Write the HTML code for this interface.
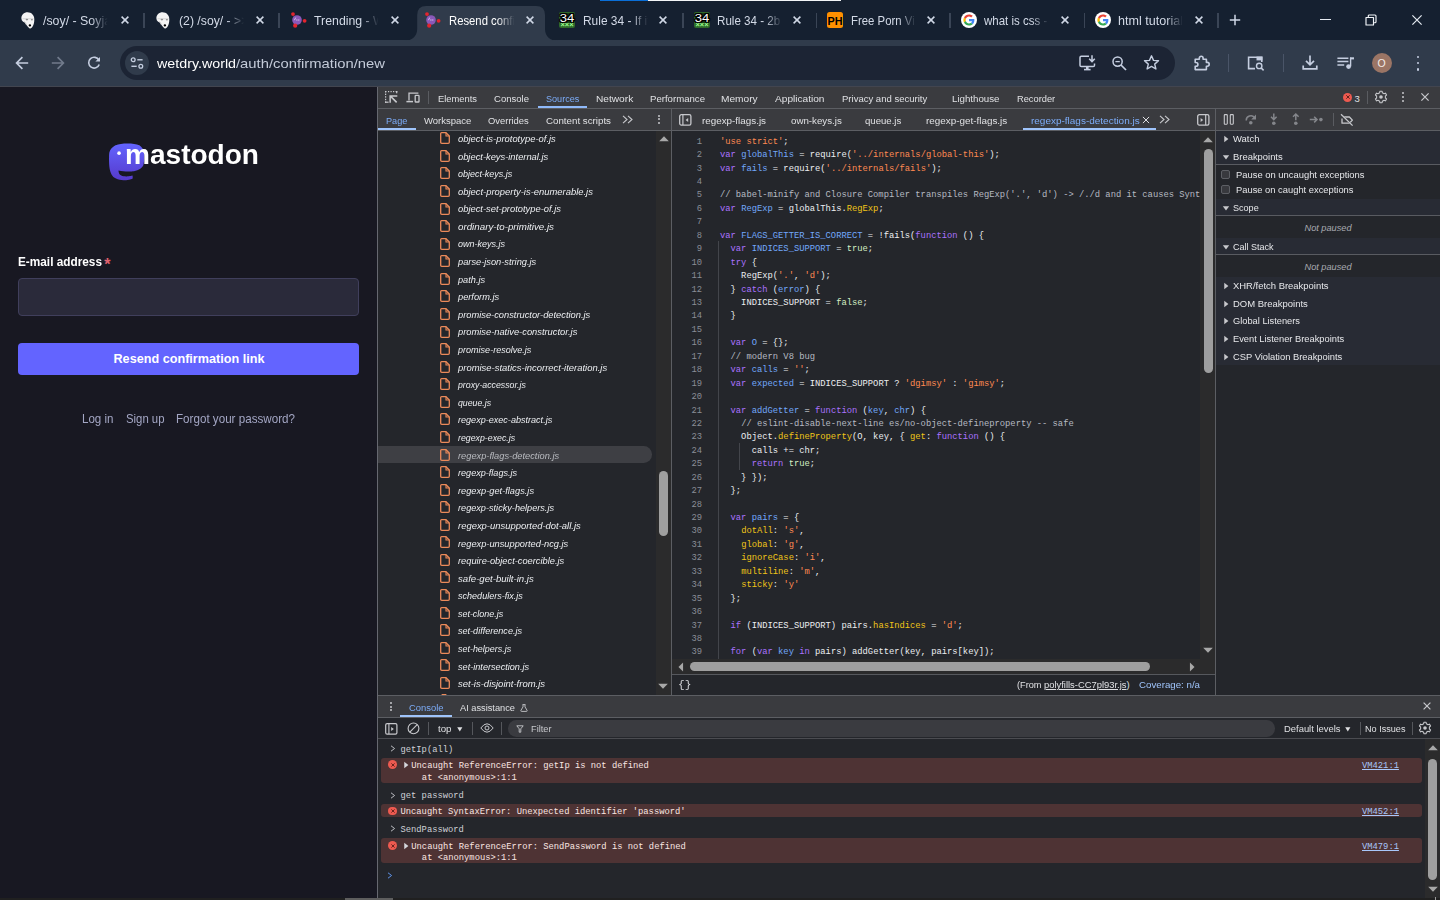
<!DOCTYPE html>
<html lang="en"><head><meta charset="utf-8"><title>Resend confirmation link - wetdry.world</title>
<style>
*{margin:0;padding:0;box-sizing:border-box}
html,body{width:1440px;height:900px;overflow:hidden;background:#24262b}
body{position:relative;font-family:"Liberation Sans", "DejaVu Sans", sans-serif;}
section{position:absolute;left:0;top:0;width:0;height:0}
section>div,section>svg,section>span{position:absolute}
.t{white-space:pre;display:block}
.m{font-family:"Liberation Mono", "DejaVu Sans Mono", monospace}
.b{display:inline-block;width:0;height:0}
svg{overflow:visible}
</style></head>
<body>
<section aria-label="Browser tab strip and toolbar">
<div style="left:0px;top:0px;width:1440px;height:40px;background:#152030;"></div>
<div style="left:600px;top:0px;width:48px;height:1px;background:#0a6fd8;"></div>
<div style="left:648px;top:0px;width:193px;height:1px;background:#f4f6f8;"></div>
<div style="left:0px;top:40px;width:1440px;height:46px;background:#303b4b;"></div>
<svg style="left:404px;top:6px;" width="156" height="35" viewBox="0 0 156 35"><path d="M0 35 C7 35 13.2 31 13.2 23 L13.2 9 Q13.2 0 22.2 0 L132 0 Q141 0 141 9 L141 23 C141 31 147 35 154 35 Z" fill="#303b4b"/></svg>
<div style="left:143.0px;top:13px;width:1.5px;height:15px;background:#3a4556;"></div>
<div style="left:278.0px;top:13px;width:1.5px;height:15px;background:#3a4556;"></div>
<div style="left:682.0px;top:13px;width:1.5px;height:15px;background:#3a4556;"></div>
<div style="left:815.5px;top:13px;width:1.5px;height:15px;background:#3a4556;"></div>
<div style="left:949.0px;top:13px;width:1.5px;height:15px;background:#3a4556;"></div>
<div style="left:1083.5px;top:13px;width:1.5px;height:15px;background:#3a4556;"></div>
<div style="left:1217.3px;top:13px;width:1.5px;height:15px;background:#3a4556;"></div>
<svg style="left:21.2px;top:11.7px;" width="14" height="17" viewBox="0 0 14 17"><path d="M0.4 6.5C0.2 2.8 3 0.2 6.6 0.2C10.4 0.2 13.2 3 13.3 7C13.4 10 12.8 12.6 11.6 14.6C10.9 16 9.6 16.9 8.4 16.2C6.6 15 5 12.6 3.6 10.6C2.4 9.9 0.6 9.2 0.4 6.5Z" fill="#f4f4f4"/><path d="M1.6 6.7H12.6" stroke="#cfcfcf" stroke-width="0.8"/><ellipse cx="5.9" cy="7.6" rx="1.3" ry="0.8" fill="#909090"/><ellipse cx="10.9" cy="7.8" rx="1.1" ry="0.8" fill="#909090"/><path d="M3.4 9.4q1.4 1.2 2 3.4" stroke="#c4c4c4" stroke-width="0.8" fill="none"/><ellipse cx="8.9" cy="13.4" rx="1.25" ry="1.05" fill="#000"/></svg>
<svg style="left:156.2px;top:11.7px;" width="14" height="17" viewBox="0 0 14 17"><path d="M0.4 6.5C0.2 2.8 3 0.2 6.6 0.2C10.4 0.2 13.2 3 13.3 7C13.4 10 12.8 12.6 11.6 14.6C10.9 16 9.6 16.9 8.4 16.2C6.6 15 5 12.6 3.6 10.6C2.4 9.9 0.6 9.2 0.4 6.5Z" fill="#f4f4f4"/><path d="M1.6 6.7H12.6" stroke="#cfcfcf" stroke-width="0.8"/><ellipse cx="5.9" cy="7.6" rx="1.3" ry="0.8" fill="#909090"/><ellipse cx="10.9" cy="7.8" rx="1.1" ry="0.8" fill="#909090"/><path d="M3.4 9.4q1.4 1.2 2 3.4" stroke="#c4c4c4" stroke-width="0.8" fill="none"/><ellipse cx="8.9" cy="13.4" rx="1.25" ry="1.05" fill="#000"/></svg>
<svg style="left:288px;top:11px;" width="18" height="18" viewBox="0 0 18 18"><circle cx="9" cy="9" r="4.8" fill="#8a58b8"/><path d="M6.4 9.2l1.3-2.6M8.9 8.3v1.4M10.8 8.3v1.4" stroke="#d9c9ee" stroke-width="0.9" fill="none"/><circle cx="5" cy="3.1" r="1.9" fill="#e3242e"/><circle cx="16.6" cy="9.8" r="1.9" fill="#e3242e"/><circle cx="7.2" cy="14.7" r="2.1" fill="#e3242e"/></svg>
<svg style="left:422.3px;top:11px;" width="18" height="18" viewBox="0 0 18 18"><circle cx="9" cy="9" r="4.8" fill="#8a58b8"/><path d="M6.4 9.2l1.3-2.6M8.9 8.3v1.4M10.8 8.3v1.4" stroke="#d9c9ee" stroke-width="0.9" fill="none"/><circle cx="5" cy="3.1" r="1.9" fill="#e3242e"/><circle cx="16.6" cy="9.8" r="1.9" fill="#e3242e"/><circle cx="7.2" cy="14.7" r="2.1" fill="#e3242e"/></svg>
<div style="left:559px;top:12px;width:16px;height:15.5px;background:#2f6a2b;border-radius:2px"></div>
<div style="left:559.5px;top:12.5px;width:15px;height:10.5px;background:rgba(0,0,0,0.45);border-radius:2px"></div>
<span id="t0" class="t " style="top:13.41px;font-size:11.5px;line-height:11.5px;color:#ffffff;left:567px;transform:translateX(-50%) scaleX(1.1331);text-shadow:1px 0 0 #000,-1px 0 0 #000,0 1px 0 #000,0 -1px 0 #000,1px 1px 0 #000,-1px -1px 0 #000,1px -1px 0 #000,-1px 1px 0 #000,0 0 2px #000;">34</span>
<span id="t1" class="t " style="top:21.71px;font-size:6.5px;line-height:6.5px;color:#9dff8f;font-weight:bold;left:567px;transform:translateX(-50%) scaleX(1.1413);">×××</span>
<div style="left:694px;top:12px;width:16px;height:15.5px;background:#2f6a2b;border-radius:2px"></div>
<div style="left:694.5px;top:12.5px;width:15px;height:10.5px;background:rgba(0,0,0,0.45);border-radius:2px"></div>
<span id="t2" class="t " style="top:13.41px;font-size:11.5px;line-height:11.5px;color:#ffffff;left:702px;transform:translateX(-50%) scaleX(1.1331);text-shadow:1px 0 0 #000,-1px 0 0 #000,0 1px 0 #000,0 -1px 0 #000,1px 1px 0 #000,-1px -1px 0 #000,1px -1px 0 #000,-1px 1px 0 #000,0 0 2px #000;">34</span>
<span id="t3" class="t " style="top:21.71px;font-size:6.5px;line-height:6.5px;color:#9dff8f;font-weight:bold;left:702px;transform:translateX(-50%) scaleX(1.1413);">×××</span>
<div style="left:827px;top:12px;width:16px;height:16px;background:#ff9000;border-radius:2.5px"></div>
<span id="t4" class="t " style="top:15.60px;font-size:11.5px;line-height:11.5px;color:#000;font-weight:bold;left:835.2px;transform:translateX(-50%) scaleX(0.9384);">PH</span>
<svg style="left:961px;top:12px;" width="16" height="16" viewBox="0 0 16 16"><circle cx="8" cy="8" r="8" fill="#fff"/><g transform="translate(2.4,2.4) scale(0.2333)"><path fill="#EA4335" d="M24 9.5c3.54 0 6.71 1.22 9.21 3.6l6.85-6.85C35.9 2.38 30.47 0 24 0 14.62 0 6.51 5.38 2.56 13.22l7.98 6.19C12.43 13.72 17.74 9.5 24 9.5z"/><path fill="#4285F4" d="M46.98 24.55c0-1.57-.15-3.09-.38-4.55H24v9.02h12.94c-.58 2.96-2.26 5.48-4.78 7.18l7.73 6c4.51-4.18 7.09-10.36 7.09-17.65z"/><path fill="#FBBC05" d="M10.53 28.59c-.48-1.45-.76-2.99-.76-4.59s.27-3.14.76-4.59l-7.98-6.19C.92 16.46 0 20.12 0 24c0 3.88.92 7.54 2.56 10.78l7.97-6.19z"/><path fill="#34A853" d="M24 48c6.48 0 11.93-2.13 15.89-5.81l-7.73-6c-2.15 1.45-4.92 2.3-8.16 2.3-6.26 0-11.57-4.22-13.47-9.91l-7.98 6.19C6.51 42.62 14.62 48 24 48z"/></g></svg>
<svg style="left:1094.5px;top:12px;" width="16" height="16" viewBox="0 0 16 16"><circle cx="8" cy="8" r="8" fill="#fff"/><g transform="translate(2.4,2.4) scale(0.2333)"><path fill="#EA4335" d="M24 9.5c3.54 0 6.71 1.22 9.21 3.6l6.85-6.85C35.9 2.38 30.47 0 24 0 14.62 0 6.51 5.38 2.56 13.22l7.98 6.19C12.43 13.72 17.74 9.5 24 9.5z"/><path fill="#4285F4" d="M46.98 24.55c0-1.57-.15-3.09-.38-4.55H24v9.02h12.94c-.58 2.96-2.26 5.48-4.78 7.18l7.73 6c4.51-4.18 7.09-10.36 7.09-17.65z"/><path fill="#FBBC05" d="M10.53 28.59c-.48-1.45-.76-2.99-.76-4.59s.27-3.14.76-4.59l-7.98-6.19C.92 16.46 0 20.12 0 24c0 3.88.92 7.54 2.56 10.78l7.97-6.19z"/><path fill="#34A853" d="M24 48c6.48 0 11.93-2.13 15.89-5.81l-7.73-6c-2.15 1.45-4.92 2.3-8.16 2.3-6.26 0-11.57-4.22-13.47-9.91l-7.98 6.19C6.51 42.62 14.62 48 24 48z"/></g></svg>
<span id="t5" class="t " style="top:15.00px;font-size:12.6px;line-height:12.6px;color:#d3dae7;left:43.3px;width:66.2px;overflow:hidden;padding:3px 0;margin-top:-3px;transform:scaleX(0.9824);transform-origin:0 0;-webkit-mask-image:linear-gradient(90deg,#000 74%,transparent 100%);mask-image:linear-gradient(90deg,#000 74%,transparent 100%);">/soy/ - Soyjak</span>
<span id="t6" class="t " style="top:15.00px;font-size:12.6px;line-height:12.6px;color:#d3dae7;left:178.9px;width:66.9px;overflow:hidden;padding:3px 0;margin-top:-3px;transform:scaleX(0.972);transform-origin:0 0;-webkit-mask-image:linear-gradient(90deg,#000 74%,transparent 100%);mask-image:linear-gradient(90deg,#000 74%,transparent 100%);">(2) /soy/ - &gt;&gt;</span>
<span id="t7" class="t " style="top:15.00px;font-size:12.6px;line-height:12.6px;color:#d3dae7;left:313.7px;width:66.4px;overflow:hidden;padding:3px 0;margin-top:-3px;transform:scaleX(0.9783);transform-origin:0 0;-webkit-mask-image:linear-gradient(90deg,#000 74%,transparent 100%);mask-image:linear-gradient(90deg,#000 74%,transparent 100%);">Trending - W</span>
<span id="t8" class="t " style="top:15.00px;font-size:12.6px;line-height:12.6px;color:#ffffff;left:448.79999999999995px;width:72.5px;overflow:hidden;padding:3px 0;margin-top:-3px;transform:scaleX(0.8965);transform-origin:0 0;-webkit-mask-image:linear-gradient(90deg,#000 74%,transparent 100%);mask-image:linear-gradient(90deg,#000 74%,transparent 100%);">Resend confi</span>
<span id="t9" class="t " style="top:15.00px;font-size:12.6px;line-height:12.6px;color:#d3dae7;left:582.6999999999999px;width:68.7px;overflow:hidden;padding:3px 0;margin-top:-3px;transform:scaleX(0.9463);transform-origin:0 0;-webkit-mask-image:linear-gradient(90deg,#000 74%,transparent 100%);mask-image:linear-gradient(90deg,#000 74%,transparent 100%);">Rule 34 - If it</span>
<span id="t10" class="t " style="top:15.00px;font-size:12.6px;line-height:12.6px;color:#d3dae7;left:716.9px;width:70.6px;overflow:hidden;padding:3px 0;margin-top:-3px;transform:scaleX(0.9212);transform-origin:0 0;-webkit-mask-image:linear-gradient(90deg,#000 74%,transparent 100%);mask-image:linear-gradient(90deg,#000 74%,transparent 100%);">Rule 34 - 2b</span>
<span id="t11" class="t " style="top:15.00px;font-size:12.6px;line-height:12.6px;color:#d3dae7;left:850.6px;width:71.9px;overflow:hidden;padding:3px 0;margin-top:-3px;transform:scaleX(0.9036);transform-origin:0 0;-webkit-mask-image:linear-gradient(90deg,#000 74%,transparent 100%);mask-image:linear-gradient(90deg,#000 74%,transparent 100%);">Free Porn Vi</span>
<span id="t12" class="t " style="top:15.00px;font-size:12.6px;line-height:12.6px;color:#d3dae7;left:984.4px;width:71.2px;overflow:hidden;padding:3px 0;margin-top:-3px;transform:scaleX(0.9124);transform-origin:0 0;-webkit-mask-image:linear-gradient(90deg,#000 74%,transparent 100%);mask-image:linear-gradient(90deg,#000 74%,transparent 100%);">what is css - </span>
<span id="t13" class="t " style="top:15.00px;font-size:12.6px;line-height:12.6px;color:#d3dae7;left:1118.4px;width:65.1px;overflow:hidden;padding:3px 0;margin-top:-3px;transform:scaleX(0.9984);transform-origin:0 0;-webkit-mask-image:linear-gradient(90deg,#000 74%,transparent 100%);mask-image:linear-gradient(90deg,#000 74%,transparent 100%);">html tutorial</span>
<svg style="left:118.8px;top:14.3px;" width="12" height="12" viewBox="0 0 12 12"><path d="M2.6 2.6L9.4 9.4M9.4 2.6L2.6 9.4" stroke="#d0d8e6" stroke-width="1.5" fill="none"/></svg>
<svg style="left:254px;top:14.3px;" width="12" height="12" viewBox="0 0 12 12"><path d="M2.6 2.6L9.4 9.4M9.4 2.6L2.6 9.4" stroke="#d0d8e6" stroke-width="1.5" fill="none"/></svg>
<svg style="left:388.7px;top:14.3px;" width="12" height="12" viewBox="0 0 12 12"><path d="M2.6 2.6L9.4 9.4M9.4 2.6L2.6 9.4" stroke="#d0d8e6" stroke-width="1.5" fill="none"/></svg>
<svg style="left:523.5px;top:14.3px;" width="12" height="12" viewBox="0 0 12 12"><path d="M2.6 2.6L9.4 9.4M9.4 2.6L2.6 9.4" stroke="#d0d8e6" stroke-width="1.5" fill="none"/></svg>
<svg style="left:657px;top:14.3px;" width="12" height="12" viewBox="0 0 12 12"><path d="M2.6 2.6L9.4 9.4M9.4 2.6L2.6 9.4" stroke="#d0d8e6" stroke-width="1.5" fill="none"/></svg>
<svg style="left:791px;top:14.3px;" width="12" height="12" viewBox="0 0 12 12"><path d="M2.6 2.6L9.4 9.4M9.4 2.6L2.6 9.4" stroke="#d0d8e6" stroke-width="1.5" fill="none"/></svg>
<svg style="left:925px;top:14.3px;" width="12" height="12" viewBox="0 0 12 12"><path d="M2.6 2.6L9.4 9.4M9.4 2.6L2.6 9.4" stroke="#d0d8e6" stroke-width="1.5" fill="none"/></svg>
<svg style="left:1059px;top:14.3px;" width="12" height="12" viewBox="0 0 12 12"><path d="M2.6 2.6L9.4 9.4M9.4 2.6L2.6 9.4" stroke="#d0d8e6" stroke-width="1.5" fill="none"/></svg>
<svg style="left:1192.7px;top:14.3px;" width="12" height="12" viewBox="0 0 12 12"><path d="M2.6 2.6L9.4 9.4M9.4 2.6L2.6 9.4" stroke="#d0d8e6" stroke-width="1.5" fill="none"/></svg>
<svg style="left:1228.5px;top:14px;" width="12" height="12" viewBox="0 0 12 12"><path d="M6 0.8V11.2M0.8 6H11.2" stroke="#d0d8e6" stroke-width="1.5"/></svg>
<div style="left:1320px;top:18.8px;width:10.5px;height:1.2px;background:#e6ebf2;"></div>
<svg style="left:1365px;top:14px;" width="12" height="12" viewBox="0 0 12 12"><path d="M1 3.5h7.5v7.5h-7.5zM3.3 3.3V2Q3.3 1 4.3 1H10Q11 1 11 2V7.7Q11 8.7 10 8.7H8.7" stroke="#f2f5f9" stroke-width="1.15" fill="none" stroke-linejoin="round"/></svg>
<svg style="left:1410.5px;top:14px;" width="12" height="12" viewBox="0 0 12 12"><path d="M1.4000000000000004 1.4000000000000004L10.6 10.6M10.6 1.4000000000000004L1.4000000000000004 10.6" stroke="#e6ebf2" stroke-width="1.2" fill="none"/></svg>
<svg style="left:14px;top:55px;" width="16" height="16" viewBox="0 0 16 16"><path d="M14.2 8H2.6M8.4 2.2L2.6 8L8.4 13.8" stroke="#c5cee0" stroke-width="1.7" fill="none"/></svg>
<svg style="left:50px;top:55px;" width="16" height="16" viewBox="0 0 16 16"><path d="M1.8 8H13.4M7.6 2.2L13.4 8L7.6 13.8" stroke="#717b8c" stroke-width="1.7" fill="none"/></svg>
<svg style="left:86px;top:55px;" width="16" height="16" viewBox="0 0 16 16"><path d="M12.9 5.2A5.4 5.4 0 1 0 13.2 9.4" stroke="#c5cee0" stroke-width="1.6" fill="none"/><path d="M14 2v4.6H9.4z" fill="#c5cee0"/></svg>
<div style="left:120px;top:46px;width:1055px;height:34px;background:#1c2434;border-radius:17px"></div>
<div style="left:125px;top:51px;width:24px;height:24px;background:#303b4b;border-radius:12px"></div>
<svg style="left:130px;top:56px;" width="14" height="14" viewBox="0 0 14 14"><circle cx="3.2" cy="3.8" r="1.9" stroke="#c5cee0" stroke-width="1.3" fill="none"/><path d="M7.3 3.8H12.6" stroke="#c5cee0" stroke-width="1.4"/><circle cx="10.8" cy="10.3" r="1.9" stroke="#c5cee0" stroke-width="1.3" fill="none"/><path d="M1.4 10.3H6.7" stroke="#c5cee0" stroke-width="1.4"/></svg>
<span id="t14" class="t " style="top:56.91px;font-size:13.6px;line-height:13.6px;color:#ffffff;left:157px;transform-origin:0 50%;transform:scaleX(1.0492);">wetdry.world</span>
<span id="t15" class="t " style="top:56.91px;font-size:13.6px;line-height:13.6px;color:#c3cad8;left:236.3px;transform-origin:0 50%;transform:scaleX(1.0893);">/auth/confirmation/new</span>
<svg style="left:1078px;top:54px;" width="19" height="18" viewBox="0 0 19 18"><path d="M11 2.2H3.3Q2 2.2 2 3.5V11.3Q2 12.6 3.3 12.6H15.2Q16.5 12.6 16.5 11.3V9.5" stroke="#c5cee0" stroke-width="1.5" fill="none"/><path d="M6 15.6H12.6" stroke="#c5cee0" stroke-width="1.6"/><path d="M9.3 12.6V15" stroke="#c5cee0" stroke-width="2.6"/><path d="M14 1.2V7.2M11.2 4.8L14 7.6L16.8 4.8" stroke="#c5cee0" stroke-width="1.5" fill="none"/></svg>
<svg style="left:1111px;top:55px;" width="17" height="17" viewBox="0 0 17 17"><circle cx="6.6" cy="6.6" r="4.6" stroke="#c5cee0" stroke-width="1.5" fill="none"/><path d="M10 10L15 15" stroke="#c5cee0" stroke-width="1.7"/><path d="M4.4 6.6H8.8" stroke="#c5cee0" stroke-width="1.3"/></svg>
<svg style="left:1143px;top:54px;" width="17" height="17" viewBox="0 0 17 17"><path d="M8.5 1.8L10.5 6.4L15.5 6.8L11.7 10.1L12.9 15L8.5 12.4L4.1 15L5.3 10.1L1.5 6.8L6.5 6.4Z" stroke="#c5cee0" stroke-width="1.4" fill="none" stroke-linejoin="round"/></svg>
<svg style="left:1193px;top:54px;" width="18" height="18" viewBox="0 0 18 18"><path d="M2.2 5.2H6.3V4.2A1.9 1.9 0 0 1 10.1 4.2V5.2H13.4V8.4H14.3A1.9 1.9 0 0 1 14.3 12.2H13.4V15.6H2.2V12.3H3A1.9 1.9 0 0 0 3 8.5H2.2Z" stroke="#c5cee0" stroke-width="1.6" fill="none" stroke-linejoin="round"/></svg>
<div style="left:1228px;top:54px;width:1.3px;height:18px;background:#4a5568;"></div>
<svg style="left:1246px;top:54px;" width="20" height="18" viewBox="0 0 20 18"><path d="M9 14.6H2.6V3.2H15.8V8" stroke="#c5cee0" stroke-width="1.6" fill="none"/><path d="M10.5 2.6H16.4V6.4H10.5Z" fill="#c5cee0"/><circle cx="13.2" cy="11.9" r="2.7" stroke="#c5cee0" stroke-width="1.4" fill="none"/><path d="M15.1 13.9L17.6 16.4" stroke="#c5cee0" stroke-width="1.5"/></svg>
<div style="left:1283px;top:54px;width:1.3px;height:18px;background:#4a5568;"></div>
<svg style="left:1301px;top:54px;" width="18" height="18" viewBox="0 0 18 18"><path d="M9 1.5V10.4M5 6.8L9 10.8L13 6.8" stroke="#c5cee0" stroke-width="1.7" fill="none"/><path d="M2.2 11.4V14.8H15.8V11.4" stroke="#c5cee0" stroke-width="1.7" fill="none"/></svg>
<svg style="left:1336px;top:54px;" width="20" height="18" viewBox="0 0 20 18"><path d="M1.4 4.2H12.4M1.4 7.6H12.4M1.4 11H8.2" stroke="#c5cee0" stroke-width="1.5"/><path d="M14.6 3.6V12.4" stroke="#c5cee0" stroke-width="1.4"/><path d="M14 3.3H18V5.4H14Z" fill="#c5cee0"/><circle cx="12.6" cy="12.6" r="2.4" fill="#c5cee0"/></svg>
<div style="left:1371.5px;top:53px;width:20px;height:20px;background:#9b7565;border-radius:10px"></div>
<span id="t16" class="t " style="top:57.71px;font-size:10.5px;line-height:10.5px;color:#f4ece8;left:1381.5px;transform:translateX(-50%);">O</span>
<div style="left:1416.6px;top:55.6px;width:2.4px;height:2.4px;background:#c5cee0;border-radius:2px"></div>
<div style="left:1416.6px;top:61.9px;width:2.4px;height:2.4px;background:#c5cee0;border-radius:2px"></div>
<div style="left:1416.6px;top:68.2px;width:2.4px;height:2.4px;background:#c5cee0;border-radius:2px"></div>
<div style="left:0px;top:86px;width:1440px;height:1px;background:#42454f;"></div>
</section>
<section aria-label="Mastodon resend confirmation page">
<div style="left:0px;top:87px;width:377px;height:811px;background:#181822;"></div>
<svg style="left:108px;top:141.8px;" width="40" height="42.1" viewBox="0 0 38 40"><defs><linearGradient id="mg" x1="0" y1="0" x2="0" y2="1"><stop offset="0" stop-color="#6364ff"/><stop offset="1" stop-color="#563acc"/></linearGradient></defs><path d="M34.6 12.9C34.6 5.3 29.6 3.1 29.6 3.1C24.7 0.8 12.3 0.8 7.4 3.1C7.4 3.1 1 5.3 1 12.9C1 21.9 0.5 33.1 9.2 35.4C12.3 36.2 15 36.4 17.2 36.3C21.2 36 23.5 34.8 23.5 34.8L23.4 31.9C23.4 31.9 20.5 32.8 17.2 32.7C14 32.6 10.6 32.3 10.1 28.3C10 27.9 10 27.5 10 27.1C17 28.8 23 27.9 24.6 27.7C29.2 27.1 33.2 24.3 33.7 21.7C34.6 17.6 34.6 12.9 34.6 12.9Z" fill="url(#mg)"/><circle cx="10.5" cy="10.6" r="1.7" fill="#fff"/></svg>
<span id="t17" class="t " style="top:142.41px;font-size:27px;line-height:27px;color:#ffffff;font-weight:bold;left:124.6px;transform-origin:0 50%;transform:scaleX(1.0386);">mastodon</span>
<span id="t18" class="t " style="top:256.00px;font-size:12.6px;line-height:12.6px;color:#ffffff;font-weight:bold;left:18px;transform-origin:0 50%;transform:scaleX(0.9374);">E-mail address</span>
<span id="t19" class="t " style="top:256.52px;font-size:16px;line-height:16px;color:#e0626f;font-weight:bold;left:104.3px;">*</span>
<div style="left:18px;top:278px;width:341px;height:38px;background:#2a2a3a;border:1px solid #403f5c;border-radius:4px"></div>
<div style="left:18px;top:343px;width:341px;height:32px;background:#6364ff;border-radius:4px"></div>
<span id="t20" class="t " style="top:351.61px;font-size:13.5px;line-height:13.5px;color:#ffffff;font-weight:bold;left:188.7px;transform:translateX(-50%) scaleX(0.9363);">Resend confirmation link</span>
<span id="t21" class="t " style="top:413.00px;font-size:12.6px;line-height:12.6px;color:#a3a6c4;left:82px;transform-origin:0 50%;transform:scaleX(0.9176);">Log in</span>
<span id="t22" class="t " style="top:413.00px;font-size:12.6px;line-height:12.6px;color:#a3a6c4;left:125.5px;transform-origin:0 50%;transform:scaleX(0.9012);">Sign up</span>
<span id="t23" class="t " style="top:413.00px;font-size:12.6px;line-height:12.6px;color:#a3a6c4;left:176px;transform-origin:0 50%;transform:scaleX(0.9238);">Forgot your password?</span>
<div style="left:377px;top:87px;width:1px;height:811px;background:#666870;"></div>
</section>
<section aria-label="DevTools background">
<div style="left:378px;top:87px;width:1062px;height:811px;background:#24262b;"></div>
</section>
<section aria-label="DevTools main toolbar">
<div style="left:378px;top:87px;width:1062px;height:21px;background:#3a3b3f;"></div>
<div style="left:378px;top:108px;width:1062px;height:1px;background:#5c5e63;"></div>
<svg style="left:384.8px;top:91px;" width="13" height="12" viewBox="0 0 13 12"><rect x="0.0" y="0.0" width="1.4" height="1.2" fill="#c7c8cc"/><rect x="3.0" y="0.0" width="1.2" height="1.2" fill="#c7c8cc"/><rect x="5.5" y="0.0" width="1.2" height="1.2" fill="#c7c8cc"/><rect x="8.0" y="0.0" width="1.2" height="1.2" fill="#c7c8cc"/><rect x="10.6" y="0.0" width="1.7" height="1.2" fill="#c7c8cc"/><rect x="11.1" y="0.0" width="1.2" height="2.3" fill="#c7c8cc"/><rect x="0.0" y="0.0" width="1.2" height="1.4" fill="#c7c8cc"/><rect x="0.0" y="2.6" width="1.2" height="1.4" fill="#c7c8cc"/><rect x="0.0" y="5.2" width="1.2" height="1.4" fill="#c7c8cc"/><rect x="0.0" y="7.8" width="1.2" height="1.4" fill="#c7c8cc"/><rect x="0.0" y="10.4" width="1.2" height="1.4" fill="#c7c8cc"/><rect x="0.0" y="10.6" width="3.6" height="1.2" fill="#c7c8cc"/><path d="M4.4 4.3H12.3V5.8H7.2L12.2 10.8L11.1 11.9L5.9 6.7V11.8H4.4Z" fill="#c7c8cc"/></svg>
<svg style="left:406px;top:92px;" width="14" height="11" viewBox="0 0 14 11"><path d="M3 8.6V1.2H12.4" stroke="#c7c8cc" stroke-width="1.3" fill="none"/><path d="M0.4 9.6H7" stroke="#c7c8cc" stroke-width="1.5"/><rect x="9.2" y="3.4" width="3.8" height="6.6" rx="0.6" stroke="#c7c8cc" stroke-width="1.3" fill="none"/></svg>
<div style="left:428px;top:91px;width:1px;height:13px;background:#5a5c61;"></div>
<span id="t24" class="t " style="top:94.01px;font-size:9.6px;line-height:9.6px;color:#dfe0e3;left:438.2px;transform-origin:0 50%;transform:scaleX(0.9750);">Elements</span>
<span id="t25" class="t " style="top:94.01px;font-size:9.6px;line-height:9.6px;color:#dfe0e3;left:493.8px;transform-origin:0 50%;transform:scaleX(0.9942);">Console</span>
<span id="t26" class="t " style="top:94.01px;font-size:9.6px;line-height:9.6px;color:#7cacf8;left:545.5px;transform-origin:0 50%;transform:scaleX(0.9459);">Sources</span>
<span id="t27" class="t " style="top:94.01px;font-size:9.6px;line-height:9.6px;color:#dfe0e3;left:595.8px;transform-origin:0 50%;transform:scaleX(1.0572);">Network</span>
<span id="t28" class="t " style="top:94.01px;font-size:9.6px;line-height:9.6px;color:#dfe0e3;left:649.5px;transform-origin:0 50%;transform:scaleX(1.0014);">Performance</span>
<span id="t29" class="t " style="top:94.01px;font-size:9.6px;line-height:9.6px;color:#dfe0e3;left:721.3px;transform-origin:0 50%;transform:scaleX(1.0590);">Memory</span>
<span id="t30" class="t " style="top:94.01px;font-size:9.6px;line-height:9.6px;color:#dfe0e3;left:775px;transform-origin:0 50%;transform:scaleX(1.0546);">Application</span>
<span id="t31" class="t " style="top:94.01px;font-size:9.6px;line-height:9.6px;color:#dfe0e3;left:841.8px;transform-origin:0 50%;transform:scaleX(0.9925);">Privacy and security</span>
<span id="t32" class="t " style="top:94.01px;font-size:9.6px;line-height:9.6px;color:#dfe0e3;left:952px;transform-origin:0 50%;transform:scaleX(1.0116);">Lighthouse</span>
<span id="t33" class="t " style="top:94.01px;font-size:9.6px;line-height:9.6px;color:#dfe0e3;left:1016.8px;transform-origin:0 50%;transform:scaleX(0.9679);">Recorder</span>
<div style="left:537.5px;top:106px;width:49.5px;height:2px;background:#8fb9fa;"></div>
<div style="left:1343px;top:92.5px;width:9px;height:9px;background:#ee5a50;border-radius:5px"></div>
<svg style="left:1341.5px;top:91.2px;" width="12" height="12" viewBox="0 0 12 12"><path d="M4.3 4.3L7.7 7.7M7.7 4.3L4.3 7.7" stroke="#4a1612" stroke-width="0.85" fill="none"/></svg>
<span id="t34" class="t " style="top:93.51px;font-size:9.6px;line-height:9.6px;color:#dfe0e3;left:1354.5px;">3</span>
<div style="left:1366.5px;top:91px;width:1px;height:13px;background:#5a5c61;"></div>
<svg style="left:1373.8px;top:90px;" width="14" height="14" viewBox="0 0 14 14"><path d="M5.68 2.70L5.87 1.21L8.13 1.21L8.32 2.70L10.07 3.71L11.45 3.13L12.58 5.08L11.38 5.99L11.38 8.01L12.58 8.92L11.45 10.87L10.07 10.29L8.32 11.30L8.13 12.79L5.87 12.79L5.68 11.30L3.93 10.29L2.55 10.87L1.42 8.92L2.62 8.01L2.62 5.99L1.42 5.08L2.55 3.13L3.93 3.71Z" fill="none" stroke="#c7c8cc" stroke-width="1.05" stroke-linejoin="round"/><circle cx="7" cy="7" r="1.8" fill="#c7c8cc"/></svg>
<div style="left:1402.0px;top:92.4px;width:2.0px;height:2.0px;background:#c7c8cc;border-radius:1px"></div>
<div style="left:1402.0px;top:96.0px;width:2.0px;height:2.0px;background:#c7c8cc;border-radius:1px"></div>
<div style="left:1402.0px;top:99.6px;width:2.0px;height:2.0px;background:#c7c8cc;border-radius:1px"></div>
<svg style="left:1419px;top:91px;" width="12" height="12" viewBox="0 0 12 12"><path d="M2.4 2.4L9.6 9.6M9.6 2.4L2.4 9.6" stroke="#c7c8cc" stroke-width="1.2" fill="none"/></svg>
</section>
<section aria-label="Sources panel toolbar">
<div style="left:378px;top:109px;width:1062px;height:21px;background:#3a3b3f;"></div>
<div style="left:378px;top:130px;width:1062px;height:1px;background:#5c5e63;"></div>
<span id="t35" class="t " style="top:116.21px;font-size:9.6px;line-height:9.6px;color:#7cacf8;left:386px;transform-origin:0 50%;transform:scaleX(0.9506);">Page</span>
<span id="t36" class="t " style="top:116.21px;font-size:9.6px;line-height:9.6px;color:#dfe0e3;left:423.8px;transform-origin:0 50%;transform:scaleX(0.9914);">Workspace</span>
<span id="t37" class="t " style="top:116.21px;font-size:9.6px;line-height:9.6px;color:#dfe0e3;left:488px;transform-origin:0 50%;transform:scaleX(0.9809);">Overrides</span>
<span id="t38" class="t " style="top:116.21px;font-size:9.6px;line-height:9.6px;color:#dfe0e3;left:546.3px;transform-origin:0 50%;transform:scaleX(1.0156);">Content scripts</span>
<div style="left:378px;top:128px;width:38.3px;height:2px;background:#9fc4fb;"></div>
<svg style="left:622px;top:114.5px;" width="12" height="9" viewBox="0 0 12 9"><path d="M1 0.8L5 4.5L1 8.2M6 0.8L10 4.5L6 8.2" stroke="#c7c8cc" stroke-width="1.1" fill="none"/></svg>
<div style="left:657.8px;top:114.7px;width:2.0px;height:2.0px;background:#c7c8cc;border-radius:1px"></div>
<div style="left:657.8px;top:118.3px;width:2.0px;height:2.0px;background:#c7c8cc;border-radius:1px"></div>
<div style="left:657.8px;top:121.89999999999999px;width:2.0px;height:2.0px;background:#c7c8cc;border-radius:1px"></div>
<div style="left:671px;top:109px;width:1px;height:586px;background:#5c5e63;"></div>
<svg style="left:679px;top:113.5px;" width="13" height="12" viewBox="0 0 13 12"><rect x="0.7" y="0.7" width="11.2" height="10.4" rx="1.6" stroke="#c7c8cc" stroke-width="1.3" fill="none"/><path d="M3.9 1V11" stroke="#c7c8cc" stroke-width="1.2"/><path d="M9.2 3.9V8L6.6 5.95Z" fill="#c7c8cc"/></svg>
<span id="t39" class="t " style="top:116.21px;font-size:9.6px;line-height:9.6px;color:#dfe0e3;left:702px;transform-origin:0 50%;transform:scaleX(1.0258);">regexp-flags.js</span>
<span id="t40" class="t " style="top:116.21px;font-size:9.6px;line-height:9.6px;color:#dfe0e3;left:790.5px;transform-origin:0 50%;transform:scaleX(1.0135);">own-keys.js</span>
<span id="t41" class="t " style="top:116.21px;font-size:9.6px;line-height:9.6px;color:#dfe0e3;left:865px;transform-origin:0 50%;transform:scaleX(1.0005);">queue.js</span>
<span id="t42" class="t " style="top:116.21px;font-size:9.6px;line-height:9.6px;color:#dfe0e3;left:925.8px;transform-origin:0 50%;transform:scaleX(1.0289);">regexp-get-flags.js</span>
<span id="t43" class="t " style="top:116.21px;font-size:9.6px;line-height:9.6px;color:#7cacf8;left:1031.3px;transform-origin:0 50%;transform:scaleX(1.0399);">regexp-flags-detection.js</span>
<svg style="left:1140.4px;top:114.4px;" width="12" height="12" viewBox="0 0 12 12"><path d="M2.9 2.9L9.1 9.1M9.1 2.9L2.9 9.1" stroke="#dfe0e3" stroke-width="1.0" fill="none"/></svg>
<div style="left:1023px;top:128px;width:133.3px;height:2px;background:#9fc4fb;"></div>
<svg style="left:1158.5px;top:114.5px;" width="12" height="9" viewBox="0 0 12 9"><path d="M1 0.8L5 4.5L1 8.2M6 0.8L10 4.5L6 8.2" stroke="#c7c8cc" stroke-width="1.1" fill="none"/></svg>
<svg style="left:1196.5px;top:113.5px;" width="13" height="12" viewBox="0 0 13 12"><rect x="0.7" y="0.7" width="11.2" height="10.4" rx="1.6" stroke="#c7c8cc" stroke-width="1.3" fill="none"/><path d="M8.7 1V11" stroke="#c7c8cc" stroke-width="1.2"/><path d="M3.6 3.9V8L6.2 5.95Z" fill="#c7c8cc"/></svg>
<div style="left:1215px;top:109px;width:1.2px;height:586px;background:#5c5e63;"></div>
<svg style="left:1223px;top:113px;" width="12" height="13" viewBox="0 0 12 13"><rect x="1.3" y="1.6" width="3" height="9.6" rx="0.6" stroke="#c7c8cc" stroke-width="1.1" fill="none"/><rect x="7.3" y="1.6" width="3" height="9.6" rx="0.6" stroke="#c7c8cc" stroke-width="1.1" fill="none"/></svg>
<svg style="left:1244px;top:113px;" width="14" height="13" viewBox="0 0 14 13"><path d="M2.2 7.4A4.7 4.7 0 0 1 10.6 4.6" stroke="#84868b" stroke-width="1.5" fill="none"/><path d="M12 1.6V6.6H7.2Z" fill="#84868b"/><circle cx="6.8" cy="9.7" r="1.8" fill="#84868b"/></svg>
<svg style="left:1267px;top:113px;" width="14" height="13" viewBox="0 0 14 13"><path d="M6.8 0.4V6.4M4 3.8L6.8 6.6L9.6 3.8" stroke="#84868b" stroke-width="1.5" fill="none"/><circle cx="6.8" cy="10.2" r="1.8" fill="#84868b"/></svg>
<svg style="left:1289px;top:113px;" width="14" height="13" viewBox="0 0 14 13"><path d="M6.8 7.2V1.2M4 3.8L6.8 1L9.6 3.8" stroke="#84868b" stroke-width="1.5" fill="none"/><circle cx="6.8" cy="10.2" r="1.8" fill="#84868b"/></svg>
<svg style="left:1309px;top:113px;" width="16" height="13" viewBox="0 0 16 13"><path d="M0.8 6.6H7.8M5.2 3.8L8 6.6L5.2 9.4" stroke="#84868b" stroke-width="1.5" fill="none"/><circle cx="11.9" cy="6.6" r="1.8" fill="#84868b"/></svg>
<div style="left:1333px;top:113px;width:1px;height:13px;background:#5a5c61;"></div>
<svg style="left:1339px;top:112.5px;" width="16" height="14" viewBox="0 0 16 14"><path d="M4.6 4H10.4L13.4 7.1L10.4 10.2H3V5.6" stroke="#c7c8cc" stroke-width="1.3" fill="none" stroke-linejoin="round"/><path d="M3 2.2L14.4 13.4" stroke="#3a3b3f" stroke-width="1.3"/><path d="M2 1.2L13.6 12.6" stroke="#c7c8cc" stroke-width="1.3"/></svg>
</section>
<section aria-label="Sources navigator file tree">
<div style="left:378px;top:131px;width:293px;height:564px;background:#24262b;"></div>
<div style="left:378px;top:446.3px;width:274px;height:16.5px;background:#3e3f44;border-radius:0 8.3px 8.3px 0"></div>
<svg style="left:440px;top:132.3px;" width="10" height="12" viewBox="0 0 10 12"><path d="M1.6 0.7H6L9.3 4V10.2Q9.3 11.3 8.2 11.3H1.8Q0.7 11.3 0.7 10.2V1.6Q0.7 0.7 1.6 0.7Z" stroke="#ec8a5a" stroke-width="1.3" fill="none"/><path d="M6 0.7V4H9.3" stroke="#ec8a5a" stroke-width="1.1" fill="none"/></svg>
<span id="t44" class="t " style="top:133.96px;font-size:9.6px;line-height:9.6px;color:#eceef1;font-style:italic;left:458px;transform-origin:0 50%;transform:scaleX(0.9808);">object-is-prototype-of.js</span>
<svg style="left:440px;top:149.86700000000002px;" width="10" height="12" viewBox="0 0 10 12"><path d="M1.6 0.7H6L9.3 4V10.2Q9.3 11.3 8.2 11.3H1.8Q0.7 11.3 0.7 10.2V1.6Q0.7 0.7 1.6 0.7Z" stroke="#ec8a5a" stroke-width="1.3" fill="none"/><path d="M6 0.7V4H9.3" stroke="#ec8a5a" stroke-width="1.1" fill="none"/></svg>
<span id="t45" class="t " style="top:151.55px;font-size:9.6px;line-height:9.6px;color:#eceef1;font-style:italic;left:458px;transform-origin:0 50%;transform:scaleX(0.9722);">object-keys-internal.js</span>
<svg style="left:440px;top:167.43400000000003px;" width="10" height="12" viewBox="0 0 10 12"><path d="M1.6 0.7H6L9.3 4V10.2Q9.3 11.3 8.2 11.3H1.8Q0.7 11.3 0.7 10.2V1.6Q0.7 0.7 1.6 0.7Z" stroke="#ec8a5a" stroke-width="1.3" fill="none"/><path d="M6 0.7V4H9.3" stroke="#ec8a5a" stroke-width="1.1" fill="none"/></svg>
<span id="t46" class="t " style="top:169.13px;font-size:9.6px;line-height:9.6px;color:#eceef1;font-style:italic;left:458px;transform-origin:0 50%;transform:scaleX(0.9325);">object-keys.js</span>
<svg style="left:440px;top:185.001px;" width="10" height="12" viewBox="0 0 10 12"><path d="M1.6 0.7H6L9.3 4V10.2Q9.3 11.3 8.2 11.3H1.8Q0.7 11.3 0.7 10.2V1.6Q0.7 0.7 1.6 0.7Z" stroke="#ec8a5a" stroke-width="1.3" fill="none"/><path d="M6 0.7V4H9.3" stroke="#ec8a5a" stroke-width="1.1" fill="none"/></svg>
<span id="t47" class="t " style="top:186.73px;font-size:9.6px;line-height:9.6px;color:#eceef1;font-style:italic;left:458px;transform-origin:0 50%;transform:scaleX(0.9805);">object-property-is-enumerable.js</span>
<svg style="left:440px;top:202.568px;" width="10" height="12" viewBox="0 0 10 12"><path d="M1.6 0.7H6L9.3 4V10.2Q9.3 11.3 8.2 11.3H1.8Q0.7 11.3 0.7 10.2V1.6Q0.7 0.7 1.6 0.7Z" stroke="#ec8a5a" stroke-width="1.3" fill="none"/><path d="M6 0.7V4H9.3" stroke="#ec8a5a" stroke-width="1.1" fill="none"/></svg>
<span id="t48" class="t " style="top:204.32px;font-size:9.6px;line-height:9.6px;color:#eceef1;font-style:italic;left:458px;transform-origin:0 50%;transform:scaleX(0.9746);">object-set-prototype-of.js</span>
<svg style="left:440px;top:220.13500000000002px;" width="10" height="12" viewBox="0 0 10 12"><path d="M1.6 0.7H6L9.3 4V10.2Q9.3 11.3 8.2 11.3H1.8Q0.7 11.3 0.7 10.2V1.6Q0.7 0.7 1.6 0.7Z" stroke="#ec8a5a" stroke-width="1.3" fill="none"/><path d="M6 0.7V4H9.3" stroke="#ec8a5a" stroke-width="1.1" fill="none"/></svg>
<span id="t49" class="t " style="top:221.91px;font-size:9.6px;line-height:9.6px;color:#eceef1;font-style:italic;left:458px;transform-origin:0 50%;transform:scaleX(1.0174);">ordinary-to-primitive.js</span>
<svg style="left:440px;top:237.702px;" width="10" height="12" viewBox="0 0 10 12"><path d="M1.6 0.7H6L9.3 4V10.2Q9.3 11.3 8.2 11.3H1.8Q0.7 11.3 0.7 10.2V1.6Q0.7 0.7 1.6 0.7Z" stroke="#ec8a5a" stroke-width="1.3" fill="none"/><path d="M6 0.7V4H9.3" stroke="#ec8a5a" stroke-width="1.1" fill="none"/></svg>
<span id="t50" class="t " style="top:239.49px;font-size:9.6px;line-height:9.6px;color:#eceef1;font-style:italic;left:458px;transform-origin:0 50%;transform:scaleX(0.9397);">own-keys.js</span>
<svg style="left:440px;top:255.269px;" width="10" height="12" viewBox="0 0 10 12"><path d="M1.6 0.7H6L9.3 4V10.2Q9.3 11.3 8.2 11.3H1.8Q0.7 11.3 0.7 10.2V1.6Q0.7 0.7 1.6 0.7Z" stroke="#ec8a5a" stroke-width="1.3" fill="none"/><path d="M6 0.7V4H9.3" stroke="#ec8a5a" stroke-width="1.1" fill="none"/></svg>
<span id="t51" class="t " style="top:257.09px;font-size:9.6px;line-height:9.6px;color:#eceef1;font-style:italic;left:458px;transform-origin:0 50%;transform:scaleX(0.9649);">parse-json-string.js</span>
<svg style="left:440px;top:272.836px;" width="10" height="12" viewBox="0 0 10 12"><path d="M1.6 0.7H6L9.3 4V10.2Q9.3 11.3 8.2 11.3H1.8Q0.7 11.3 0.7 10.2V1.6Q0.7 0.7 1.6 0.7Z" stroke="#ec8a5a" stroke-width="1.3" fill="none"/><path d="M6 0.7V4H9.3" stroke="#ec8a5a" stroke-width="1.1" fill="none"/></svg>
<span id="t52" class="t " style="top:274.68px;font-size:9.6px;line-height:9.6px;color:#eceef1;font-style:italic;left:458px;transform-origin:0 50%;transform:scaleX(0.9582);">path.js</span>
<svg style="left:440px;top:290.403px;" width="10" height="12" viewBox="0 0 10 12"><path d="M1.6 0.7H6L9.3 4V10.2Q9.3 11.3 8.2 11.3H1.8Q0.7 11.3 0.7 10.2V1.6Q0.7 0.7 1.6 0.7Z" stroke="#ec8a5a" stroke-width="1.3" fill="none"/><path d="M6 0.7V4H9.3" stroke="#ec8a5a" stroke-width="1.1" fill="none"/></svg>
<span id="t53" class="t " style="top:292.27px;font-size:9.6px;line-height:9.6px;color:#eceef1;font-style:italic;left:458px;transform-origin:0 50%;transform:scaleX(0.9635);">perform.js</span>
<svg style="left:440px;top:307.97px;" width="10" height="12" viewBox="0 0 10 12"><path d="M1.6 0.7H6L9.3 4V10.2Q9.3 11.3 8.2 11.3H1.8Q0.7 11.3 0.7 10.2V1.6Q0.7 0.7 1.6 0.7Z" stroke="#ec8a5a" stroke-width="1.3" fill="none"/><path d="M6 0.7V4H9.3" stroke="#ec8a5a" stroke-width="1.1" fill="none"/></svg>
<span id="t54" class="t " style="top:309.85px;font-size:9.6px;line-height:9.6px;color:#eceef1;font-style:italic;left:458px;transform-origin:0 50%;transform:scaleX(0.9697);">promise-constructor-detection.js</span>
<svg style="left:440px;top:325.53700000000003px;" width="10" height="12" viewBox="0 0 10 12"><path d="M1.6 0.7H6L9.3 4V10.2Q9.3 11.3 8.2 11.3H1.8Q0.7 11.3 0.7 10.2V1.6Q0.7 0.7 1.6 0.7Z" stroke="#ec8a5a" stroke-width="1.3" fill="none"/><path d="M6 0.7V4H9.3" stroke="#ec8a5a" stroke-width="1.1" fill="none"/></svg>
<span id="t55" class="t " style="top:327.45px;font-size:9.6px;line-height:9.6px;color:#eceef1;font-style:italic;left:458px;transform-origin:0 50%;transform:scaleX(0.9714);">promise-native-constructor.js</span>
<svg style="left:440px;top:343.10400000000004px;" width="10" height="12" viewBox="0 0 10 12"><path d="M1.6 0.7H6L9.3 4V10.2Q9.3 11.3 8.2 11.3H1.8Q0.7 11.3 0.7 10.2V1.6Q0.7 0.7 1.6 0.7Z" stroke="#ec8a5a" stroke-width="1.3" fill="none"/><path d="M6 0.7V4H9.3" stroke="#ec8a5a" stroke-width="1.1" fill="none"/></svg>
<span id="t56" class="t " style="top:345.04px;font-size:9.6px;line-height:9.6px;color:#eceef1;font-style:italic;left:458px;transform-origin:0 50%;transform:scaleX(0.9416);">promise-resolve.js</span>
<svg style="left:440px;top:360.67100000000005px;" width="10" height="12" viewBox="0 0 10 12"><path d="M1.6 0.7H6L9.3 4V10.2Q9.3 11.3 8.2 11.3H1.8Q0.7 11.3 0.7 10.2V1.6Q0.7 0.7 1.6 0.7Z" stroke="#ec8a5a" stroke-width="1.3" fill="none"/><path d="M6 0.7V4H9.3" stroke="#ec8a5a" stroke-width="1.1" fill="none"/></svg>
<span id="t57" class="t " style="top:362.63px;font-size:9.6px;line-height:9.6px;color:#eceef1;font-style:italic;left:458px;transform-origin:0 50%;transform:scaleX(0.9848);">promise-statics-incorrect-iteration.js</span>
<svg style="left:440px;top:378.238px;" width="10" height="12" viewBox="0 0 10 12"><path d="M1.6 0.7H6L9.3 4V10.2Q9.3 11.3 8.2 11.3H1.8Q0.7 11.3 0.7 10.2V1.6Q0.7 0.7 1.6 0.7Z" stroke="#ec8a5a" stroke-width="1.3" fill="none"/><path d="M6 0.7V4H9.3" stroke="#ec8a5a" stroke-width="1.1" fill="none"/></svg>
<span id="t58" class="t " style="top:380.21px;font-size:9.6px;line-height:9.6px;color:#eceef1;font-style:italic;left:458px;transform-origin:0 50%;transform:scaleX(0.9127);">proxy-accessor.js</span>
<svg style="left:440px;top:395.805px;" width="10" height="12" viewBox="0 0 10 12"><path d="M1.6 0.7H6L9.3 4V10.2Q9.3 11.3 8.2 11.3H1.8Q0.7 11.3 0.7 10.2V1.6Q0.7 0.7 1.6 0.7Z" stroke="#ec8a5a" stroke-width="1.3" fill="none"/><path d="M6 0.7V4H9.3" stroke="#ec8a5a" stroke-width="1.1" fill="none"/></svg>
<span id="t59" class="t " style="top:397.82px;font-size:9.6px;line-height:9.6px;color:#eceef1;font-style:italic;left:458px;transform-origin:0 50%;transform:scaleX(0.9123);">queue.js</span>
<svg style="left:440px;top:413.372px;" width="10" height="12" viewBox="0 0 10 12"><path d="M1.6 0.7H6L9.3 4V10.2Q9.3 11.3 8.2 11.3H1.8Q0.7 11.3 0.7 10.2V1.6Q0.7 0.7 1.6 0.7Z" stroke="#ec8a5a" stroke-width="1.3" fill="none"/><path d="M6 0.7V4H9.3" stroke="#ec8a5a" stroke-width="1.1" fill="none"/></svg>
<span id="t60" class="t " style="top:415.40px;font-size:9.6px;line-height:9.6px;color:#eceef1;font-style:italic;left:458px;transform-origin:0 50%;transform:scaleX(0.9447);">regexp-exec-abstract.js</span>
<svg style="left:440px;top:430.939px;" width="10" height="12" viewBox="0 0 10 12"><path d="M1.6 0.7H6L9.3 4V10.2Q9.3 11.3 8.2 11.3H1.8Q0.7 11.3 0.7 10.2V1.6Q0.7 0.7 1.6 0.7Z" stroke="#ec8a5a" stroke-width="1.3" fill="none"/><path d="M6 0.7V4H9.3" stroke="#ec8a5a" stroke-width="1.1" fill="none"/></svg>
<span id="t61" class="t " style="top:432.99px;font-size:9.6px;line-height:9.6px;color:#eceef1;font-style:italic;left:458px;transform-origin:0 50%;transform:scaleX(0.9152);">regexp-exec.js</span>
<svg style="left:440px;top:448.50600000000003px;" width="10" height="12" viewBox="0 0 10 12"><path d="M1.6 0.7H6L9.3 4V10.2Q9.3 11.3 8.2 11.3H1.8Q0.7 11.3 0.7 10.2V1.6Q0.7 0.7 1.6 0.7Z" stroke="#ec8a5a" stroke-width="1.3" fill="none"/><path d="M6 0.7V4H9.3" stroke="#ec8a5a" stroke-width="1.1" fill="none"/></svg>
<span id="t62" class="t " style="top:450.57px;font-size:9.6px;line-height:9.6px;color:#b9bbc0;font-style:italic;left:458px;transform-origin:0 50%;transform:scaleX(0.9672);">regexp-flags-detection.js</span>
<svg style="left:440px;top:466.07300000000004px;" width="10" height="12" viewBox="0 0 10 12"><path d="M1.6 0.7H6L9.3 4V10.2Q9.3 11.3 8.2 11.3H1.8Q0.7 11.3 0.7 10.2V1.6Q0.7 0.7 1.6 0.7Z" stroke="#ec8a5a" stroke-width="1.3" fill="none"/><path d="M6 0.7V4H9.3" stroke="#ec8a5a" stroke-width="1.1" fill="none"/></svg>
<span id="t63" class="t " style="top:468.18px;font-size:9.6px;line-height:9.6px;color:#eceef1;font-style:italic;left:458px;transform-origin:0 50%;transform:scaleX(0.9473);">regexp-flags.js</span>
<svg style="left:440px;top:483.64000000000004px;" width="10" height="12" viewBox="0 0 10 12"><path d="M1.6 0.7H6L9.3 4V10.2Q9.3 11.3 8.2 11.3H1.8Q0.7 11.3 0.7 10.2V1.6Q0.7 0.7 1.6 0.7Z" stroke="#ec8a5a" stroke-width="1.3" fill="none"/><path d="M6 0.7V4H9.3" stroke="#ec8a5a" stroke-width="1.1" fill="none"/></svg>
<span id="t64" class="t " style="top:485.76px;font-size:9.6px;line-height:9.6px;color:#eceef1;font-style:italic;left:458px;transform-origin:0 50%;transform:scaleX(0.9630);">regexp-get-flags.js</span>
<svg style="left:440px;top:501.207px;" width="10" height="12" viewBox="0 0 10 12"><path d="M1.6 0.7H6L9.3 4V10.2Q9.3 11.3 8.2 11.3H1.8Q0.7 11.3 0.7 10.2V1.6Q0.7 0.7 1.6 0.7Z" stroke="#ec8a5a" stroke-width="1.3" fill="none"/><path d="M6 0.7V4H9.3" stroke="#ec8a5a" stroke-width="1.1" fill="none"/></svg>
<span id="t65" class="t " style="top:503.35px;font-size:9.6px;line-height:9.6px;color:#eceef1;font-style:italic;left:458px;transform-origin:0 50%;transform:scaleX(0.9526);">regexp-sticky-helpers.js</span>
<svg style="left:440px;top:518.774px;" width="10" height="12" viewBox="0 0 10 12"><path d="M1.6 0.7H6L9.3 4V10.2Q9.3 11.3 8.2 11.3H1.8Q0.7 11.3 0.7 10.2V1.6Q0.7 0.7 1.6 0.7Z" stroke="#ec8a5a" stroke-width="1.3" fill="none"/><path d="M6 0.7V4H9.3" stroke="#ec8a5a" stroke-width="1.1" fill="none"/></svg>
<span id="t66" class="t " style="top:520.93px;font-size:9.6px;line-height:9.6px;color:#eceef1;font-style:italic;left:458px;transform-origin:0 50%;transform:scaleX(0.9832);">regexp-unsupported-dot-all.js</span>
<svg style="left:440px;top:536.341px;" width="10" height="12" viewBox="0 0 10 12"><path d="M1.6 0.7H6L9.3 4V10.2Q9.3 11.3 8.2 11.3H1.8Q0.7 11.3 0.7 10.2V1.6Q0.7 0.7 1.6 0.7Z" stroke="#ec8a5a" stroke-width="1.3" fill="none"/><path d="M6 0.7V4H9.3" stroke="#ec8a5a" stroke-width="1.1" fill="none"/></svg>
<span id="t67" class="t " style="top:538.54px;font-size:9.6px;line-height:9.6px;color:#eceef1;font-style:italic;left:458px;transform-origin:0 50%;transform:scaleX(0.9655);">regexp-unsupported-ncg.js</span>
<svg style="left:440px;top:553.908px;" width="10" height="12" viewBox="0 0 10 12"><path d="M1.6 0.7H6L9.3 4V10.2Q9.3 11.3 8.2 11.3H1.8Q0.7 11.3 0.7 10.2V1.6Q0.7 0.7 1.6 0.7Z" stroke="#ec8a5a" stroke-width="1.3" fill="none"/><path d="M6 0.7V4H9.3" stroke="#ec8a5a" stroke-width="1.1" fill="none"/></svg>
<span id="t68" class="t " style="top:556.12px;font-size:9.6px;line-height:9.6px;color:#eceef1;font-style:italic;left:458px;transform-origin:0 50%;transform:scaleX(0.9668);">require-object-coercible.js</span>
<svg style="left:440px;top:571.475px;" width="10" height="12" viewBox="0 0 10 12"><path d="M1.6 0.7H6L9.3 4V10.2Q9.3 11.3 8.2 11.3H1.8Q0.7 11.3 0.7 10.2V1.6Q0.7 0.7 1.6 0.7Z" stroke="#ec8a5a" stroke-width="1.3" fill="none"/><path d="M6 0.7V4H9.3" stroke="#ec8a5a" stroke-width="1.1" fill="none"/></svg>
<span id="t69" class="t " style="top:573.71px;font-size:9.6px;line-height:9.6px;color:#eceef1;font-style:italic;left:458px;transform-origin:0 50%;transform:scaleX(1.0011);">safe-get-built-in.js</span>
<svg style="left:440px;top:589.042px;" width="10" height="12" viewBox="0 0 10 12"><path d="M1.6 0.7H6L9.3 4V10.2Q9.3 11.3 8.2 11.3H1.8Q0.7 11.3 0.7 10.2V1.6Q0.7 0.7 1.6 0.7Z" stroke="#ec8a5a" stroke-width="1.3" fill="none"/><path d="M6 0.7V4H9.3" stroke="#ec8a5a" stroke-width="1.1" fill="none"/></svg>
<span id="t70" class="t " style="top:591.30px;font-size:9.6px;line-height:9.6px;color:#eceef1;font-style:italic;left:458px;transform-origin:0 50%;transform:scaleX(0.9436);">schedulers-fix.js</span>
<svg style="left:440px;top:606.609px;" width="10" height="12" viewBox="0 0 10 12"><path d="M1.6 0.7H6L9.3 4V10.2Q9.3 11.3 8.2 11.3H1.8Q0.7 11.3 0.7 10.2V1.6Q0.7 0.7 1.6 0.7Z" stroke="#ec8a5a" stroke-width="1.3" fill="none"/><path d="M6 0.7V4H9.3" stroke="#ec8a5a" stroke-width="1.1" fill="none"/></svg>
<span id="t71" class="t " style="top:608.88px;font-size:9.6px;line-height:9.6px;color:#eceef1;font-style:italic;left:458px;transform-origin:0 50%;transform:scaleX(0.9293);">set-clone.js</span>
<svg style="left:440px;top:624.1759999999999px;" width="10" height="12" viewBox="0 0 10 12"><path d="M1.6 0.7H6L9.3 4V10.2Q9.3 11.3 8.2 11.3H1.8Q0.7 11.3 0.7 10.2V1.6Q0.7 0.7 1.6 0.7Z" stroke="#ec8a5a" stroke-width="1.3" fill="none"/><path d="M6 0.7V4H9.3" stroke="#ec8a5a" stroke-width="1.1" fill="none"/></svg>
<span id="t72" class="t " style="top:626.48px;font-size:9.6px;line-height:9.6px;color:#eceef1;font-style:italic;left:458px;transform-origin:0 50%;transform:scaleX(0.9451);">set-difference.js</span>
<svg style="left:440px;top:641.7429999999999px;" width="10" height="12" viewBox="0 0 10 12"><path d="M1.6 0.7H6L9.3 4V10.2Q9.3 11.3 8.2 11.3H1.8Q0.7 11.3 0.7 10.2V1.6Q0.7 0.7 1.6 0.7Z" stroke="#ec8a5a" stroke-width="1.3" fill="none"/><path d="M6 0.7V4H9.3" stroke="#ec8a5a" stroke-width="1.1" fill="none"/></svg>
<span id="t73" class="t " style="top:644.07px;font-size:9.6px;line-height:9.6px;color:#eceef1;font-style:italic;left:458px;transform-origin:0 50%;transform:scaleX(0.9306);">set-helpers.js</span>
<svg style="left:440px;top:659.31px;" width="10" height="12" viewBox="0 0 10 12"><path d="M1.6 0.7H6L9.3 4V10.2Q9.3 11.3 8.2 11.3H1.8Q0.7 11.3 0.7 10.2V1.6Q0.7 0.7 1.6 0.7Z" stroke="#ec8a5a" stroke-width="1.3" fill="none"/><path d="M6 0.7V4H9.3" stroke="#ec8a5a" stroke-width="1.1" fill="none"/></svg>
<span id="t74" class="t " style="top:661.66px;font-size:9.6px;line-height:9.6px;color:#eceef1;font-style:italic;left:458px;transform-origin:0 50%;transform:scaleX(0.9524);">set-intersection.js</span>
<svg style="left:440px;top:676.877px;" width="10" height="12" viewBox="0 0 10 12"><path d="M1.6 0.7H6L9.3 4V10.2Q9.3 11.3 8.2 11.3H1.8Q0.7 11.3 0.7 10.2V1.6Q0.7 0.7 1.6 0.7Z" stroke="#ec8a5a" stroke-width="1.3" fill="none"/><path d="M6 0.7V4H9.3" stroke="#ec8a5a" stroke-width="1.1" fill="none"/></svg>
<span id="t75" class="t " style="top:679.24px;font-size:9.6px;line-height:9.6px;color:#eceef1;font-style:italic;left:458px;transform-origin:0 50%;transform:scaleX(0.9901);">set-is-disjoint-from.js</span>
<svg style="left:440px;top:693.8px;" width="10" height="1.2" viewBox="0 0 10 1.2"><path d="M1.6 0.6H6.4" stroke="#ec8a5a" stroke-width="1.2"/></svg>
<div style="left:656px;top:131px;width:15px;height:564px;background:#2b2b2c;"></div>
<svg style="left:658.5px;top:134px;" width="10" height="10" viewBox="0 0 10 10"><path d="M0.20000000000000018 7.16L9.8 7.16L5 2.36Z" fill="#a8a8a8"/></svg>
<svg style="left:658.4px;top:680.6px;" width="10" height="10" viewBox="0 0 10 10"><path d="M0.20000000000000018 2.84L9.8 2.84L5 7.640000000000001Z" fill="#a8a8a8"/></svg>
<div style="left:659px;top:471px;width:9px;height:64.5px;background:#9f9f9f;border-radius:4.5px"></div>
<div style="left:378px;top:695px;width:1062px;height:1px;background:#5c5e63;"></div>
</section>
<section aria-label="Source code editor">
<div style="left:672px;top:131px;width:543px;height:564px;background:#24262b;"></div>
<div style="left:718px;top:241.11999999999998px;width:1px;height:422.64px;background:#43454b;"></div>
<div style="left:739px;top:442.72px;width:1px;height:26.88px;background:#43454b;"></div>
<span id="t76" class="t m" style="top:137.71px;font-size:8.8px;line-height:8.8px;color:#8a8e97;left:702px;transform:translateX(-100%);">1</span>
<span id="t77" class="t m" style="top:137.71px;font-size:8.8px;line-height:8.8px;color:#eceef1;left:720px;"><span style="color:#ff8a52">'use strict'</span>;</span>
<span id="t78" class="t m" style="top:151.15px;font-size:8.8px;line-height:8.8px;color:#8a8e97;left:702px;transform:translateX(-100%);">2</span>
<span id="t79" class="t m" style="top:151.15px;font-size:8.8px;line-height:8.8px;color:#eceef1;left:720px;"><span style="color:#ab72ff">var</span> <span style="color:#72a8fb">globalThis</span> = require(<span style="color:#ff8a52">'../internals/global-this'</span>);</span>
<span id="t80" class="t m" style="top:164.59px;font-size:8.8px;line-height:8.8px;color:#8a8e97;left:702px;transform:translateX(-100%);">3</span>
<span id="t81" class="t m" style="top:164.59px;font-size:8.8px;line-height:8.8px;color:#eceef1;left:720px;"><span style="color:#ab72ff">var</span> <span style="color:#72a8fb">fails</span> = require(<span style="color:#ff8a52">'../internals/fails'</span>);</span>
<span id="t82" class="t m" style="top:178.03px;font-size:8.8px;line-height:8.8px;color:#8a8e97;left:702px;transform:translateX(-100%);">4</span>
<span id="t83" class="t m" style="top:191.46px;font-size:8.8px;line-height:8.8px;color:#8a8e97;left:702px;transform:translateX(-100%);">5</span>
<span id="t84" class="t m" style="top:191.46px;font-size:8.8px;line-height:8.8px;color:#eceef1;left:720px;"><span style="color:#b6bac2">// babel-minify and Closure Compiler transpiles RegExp('.', 'd') -&gt; /./d and it causes Synt</span></span>
<span id="t85" class="t m" style="top:204.90px;font-size:8.8px;line-height:8.8px;color:#8a8e97;left:702px;transform:translateX(-100%);">6</span>
<span id="t86" class="t m" style="top:204.90px;font-size:8.8px;line-height:8.8px;color:#eceef1;left:720px;"><span style="color:#ab72ff">var</span> <span style="color:#72a8fb">RegExp</span> = globalThis.<span style="color:#f0c518">RegExp</span>;</span>
<span id="t87" class="t m" style="top:218.34px;font-size:8.8px;line-height:8.8px;color:#8a8e97;left:702px;transform:translateX(-100%);">7</span>
<span id="t88" class="t m" style="top:231.79px;font-size:8.8px;line-height:8.8px;color:#8a8e97;left:702px;transform:translateX(-100%);">8</span>
<span id="t89" class="t m" style="top:231.79px;font-size:8.8px;line-height:8.8px;color:#eceef1;left:720px;"><span style="color:#ab72ff">var</span> <span style="color:#72a8fb">FLAGS_GETTER_IS_CORRECT</span> = !fails(<span style="color:#ab72ff">function</span> () {</span>
<span id="t90" class="t m" style="top:245.23px;font-size:8.8px;line-height:8.8px;color:#8a8e97;left:702px;transform:translateX(-100%);">9</span>
<span id="t91" class="t m" style="top:245.23px;font-size:8.8px;line-height:8.8px;color:#eceef1;left:720px;">  <span style="color:#ab72ff">var</span> <span style="color:#72a8fb">INDICES_SUPPORT</span> = <span style="color:#d3efc4">true</span>;</span>
<span id="t92" class="t m" style="top:258.67px;font-size:8.8px;line-height:8.8px;color:#8a8e97;left:702px;transform:translateX(-100%);">10</span>
<span id="t93" class="t m" style="top:258.67px;font-size:8.8px;line-height:8.8px;color:#eceef1;left:720px;">  <span style="color:#ab72ff">try</span> {</span>
<span id="t94" class="t m" style="top:272.10px;font-size:8.8px;line-height:8.8px;color:#8a8e97;left:702px;transform:translateX(-100%);">11</span>
<span id="t95" class="t m" style="top:272.10px;font-size:8.8px;line-height:8.8px;color:#eceef1;left:720px;">    RegExp(<span style="color:#ff8a52">'.'</span>, <span style="color:#ff8a52">'d'</span>);</span>
<span id="t96" class="t m" style="top:285.54px;font-size:8.8px;line-height:8.8px;color:#8a8e97;left:702px;transform:translateX(-100%);">12</span>
<span id="t97" class="t m" style="top:285.54px;font-size:8.8px;line-height:8.8px;color:#eceef1;left:720px;">  } <span style="color:#ab72ff">catch</span> (<span style="color:#72a8fb">error</span>) {</span>
<span id="t98" class="t m" style="top:298.98px;font-size:8.8px;line-height:8.8px;color:#8a8e97;left:702px;transform:translateX(-100%);">13</span>
<span id="t99" class="t m" style="top:298.98px;font-size:8.8px;line-height:8.8px;color:#eceef1;left:720px;">    INDICES_SUPPORT = <span style="color:#d3efc4">false</span>;</span>
<span id="t100" class="t m" style="top:312.43px;font-size:8.8px;line-height:8.8px;color:#8a8e97;left:702px;transform:translateX(-100%);">14</span>
<span id="t101" class="t m" style="top:312.43px;font-size:8.8px;line-height:8.8px;color:#eceef1;left:720px;">  }</span>
<span id="t102" class="t m" style="top:325.87px;font-size:8.8px;line-height:8.8px;color:#8a8e97;left:702px;transform:translateX(-100%);">15</span>
<span id="t103" class="t m" style="top:339.31px;font-size:8.8px;line-height:8.8px;color:#8a8e97;left:702px;transform:translateX(-100%);">16</span>
<span id="t104" class="t m" style="top:339.31px;font-size:8.8px;line-height:8.8px;color:#eceef1;left:720px;">  <span style="color:#ab72ff">var</span> <span style="color:#72a8fb">O</span> = {};</span>
<span id="t105" class="t m" style="top:352.74px;font-size:8.8px;line-height:8.8px;color:#8a8e97;left:702px;transform:translateX(-100%);">17</span>
<span id="t106" class="t m" style="top:352.74px;font-size:8.8px;line-height:8.8px;color:#eceef1;left:720px;">  <span style="color:#b6bac2">// modern V8 bug</span></span>
<span id="t107" class="t m" style="top:366.18px;font-size:8.8px;line-height:8.8px;color:#8a8e97;left:702px;transform:translateX(-100%);">18</span>
<span id="t108" class="t m" style="top:366.18px;font-size:8.8px;line-height:8.8px;color:#eceef1;left:720px;">  <span style="color:#ab72ff">var</span> <span style="color:#72a8fb">calls</span> = <span style="color:#ff8a52">''</span>;</span>
<span id="t109" class="t m" style="top:379.62px;font-size:8.8px;line-height:8.8px;color:#8a8e97;left:702px;transform:translateX(-100%);">19</span>
<span id="t110" class="t m" style="top:379.62px;font-size:8.8px;line-height:8.8px;color:#eceef1;left:720px;">  <span style="color:#ab72ff">var</span> <span style="color:#72a8fb">expected</span> = INDICES_SUPPORT ? <span style="color:#ff8a52">'dgimsy'</span> : <span style="color:#ff8a52">'gimsy'</span>;</span>
<span id="t111" class="t m" style="top:393.07px;font-size:8.8px;line-height:8.8px;color:#8a8e97;left:702px;transform:translateX(-100%);">20</span>
<span id="t112" class="t m" style="top:406.51px;font-size:8.8px;line-height:8.8px;color:#8a8e97;left:702px;transform:translateX(-100%);">21</span>
<span id="t113" class="t m" style="top:406.51px;font-size:8.8px;line-height:8.8px;color:#eceef1;left:720px;">  <span style="color:#ab72ff">var</span> <span style="color:#72a8fb">addGetter</span> = <span style="color:#ab72ff">function</span> (<span style="color:#72a8fb">key</span>, <span style="color:#72a8fb">chr</span>) {</span>
<span id="t114" class="t m" style="top:419.95px;font-size:8.8px;line-height:8.8px;color:#8a8e97;left:702px;transform:translateX(-100%);">22</span>
<span id="t115" class="t m" style="top:419.95px;font-size:8.8px;line-height:8.8px;color:#eceef1;left:720px;">    <span style="color:#b6bac2">// eslint-disable-next-line es/no-object-defineproperty -- safe</span></span>
<span id="t116" class="t m" style="top:433.39px;font-size:8.8px;line-height:8.8px;color:#8a8e97;left:702px;transform:translateX(-100%);">23</span>
<span id="t117" class="t m" style="top:433.39px;font-size:8.8px;line-height:8.8px;color:#eceef1;left:720px;">    Object.<span style="color:#f0c518">defineProperty</span>(O, key, { <span style="color:#f0c518">get</span>: <span style="color:#ab72ff">function</span> () {</span>
<span id="t118" class="t m" style="top:446.82px;font-size:8.8px;line-height:8.8px;color:#8a8e97;left:702px;transform:translateX(-100%);">24</span>
<span id="t119" class="t m" style="top:446.82px;font-size:8.8px;line-height:8.8px;color:#eceef1;left:720px;">      calls += chr;</span>
<span id="t120" class="t m" style="top:460.26px;font-size:8.8px;line-height:8.8px;color:#8a8e97;left:702px;transform:translateX(-100%);">25</span>
<span id="t121" class="t m" style="top:460.26px;font-size:8.8px;line-height:8.8px;color:#eceef1;left:720px;">      <span style="color:#ab72ff">return</span> <span style="color:#d3efc4">true</span>;</span>
<span id="t122" class="t m" style="top:473.71px;font-size:8.8px;line-height:8.8px;color:#8a8e97;left:702px;transform:translateX(-100%);">26</span>
<span id="t123" class="t m" style="top:473.71px;font-size:8.8px;line-height:8.8px;color:#eceef1;left:720px;">    } });</span>
<span id="t124" class="t m" style="top:487.15px;font-size:8.8px;line-height:8.8px;color:#8a8e97;left:702px;transform:translateX(-100%);">27</span>
<span id="t125" class="t m" style="top:487.15px;font-size:8.8px;line-height:8.8px;color:#eceef1;left:720px;">  };</span>
<span id="t126" class="t m" style="top:500.59px;font-size:8.8px;line-height:8.8px;color:#8a8e97;left:702px;transform:translateX(-100%);">28</span>
<span id="t127" class="t m" style="top:514.03px;font-size:8.8px;line-height:8.8px;color:#8a8e97;left:702px;transform:translateX(-100%);">29</span>
<span id="t128" class="t m" style="top:514.03px;font-size:8.8px;line-height:8.8px;color:#eceef1;left:720px;">  <span style="color:#ab72ff">var</span> <span style="color:#72a8fb">pairs</span> = {</span>
<span id="t129" class="t m" style="top:527.46px;font-size:8.8px;line-height:8.8px;color:#8a8e97;left:702px;transform:translateX(-100%);">30</span>
<span id="t130" class="t m" style="top:527.46px;font-size:8.8px;line-height:8.8px;color:#eceef1;left:720px;">    <span style="color:#f0c518">dotAll</span>: <span style="color:#ff8a52">'s'</span>,</span>
<span id="t131" class="t m" style="top:540.90px;font-size:8.8px;line-height:8.8px;color:#8a8e97;left:702px;transform:translateX(-100%);">31</span>
<span id="t132" class="t m" style="top:540.90px;font-size:8.8px;line-height:8.8px;color:#eceef1;left:720px;">    <span style="color:#f0c518">global</span>: <span style="color:#ff8a52">'g'</span>,</span>
<span id="t133" class="t m" style="top:554.34px;font-size:8.8px;line-height:8.8px;color:#8a8e97;left:702px;transform:translateX(-100%);">32</span>
<span id="t134" class="t m" style="top:554.34px;font-size:8.8px;line-height:8.8px;color:#eceef1;left:720px;">    <span style="color:#f0c518">ignoreCase</span>: <span style="color:#ff8a52">'i'</span>,</span>
<span id="t135" class="t m" style="top:567.79px;font-size:8.8px;line-height:8.8px;color:#8a8e97;left:702px;transform:translateX(-100%);">33</span>
<span id="t136" class="t m" style="top:567.79px;font-size:8.8px;line-height:8.8px;color:#eceef1;left:720px;">    <span style="color:#f0c518">multiline</span>: <span style="color:#ff8a52">'m'</span>,</span>
<span id="t137" class="t m" style="top:581.23px;font-size:8.8px;line-height:8.8px;color:#8a8e97;left:702px;transform:translateX(-100%);">34</span>
<span id="t138" class="t m" style="top:581.23px;font-size:8.8px;line-height:8.8px;color:#eceef1;left:720px;">    <span style="color:#f0c518">sticky</span>: <span style="color:#ff8a52">'y'</span></span>
<span id="t139" class="t m" style="top:594.67px;font-size:8.8px;line-height:8.8px;color:#8a8e97;left:702px;transform:translateX(-100%);">35</span>
<span id="t140" class="t m" style="top:594.67px;font-size:8.8px;line-height:8.8px;color:#eceef1;left:720px;">  };</span>
<span id="t141" class="t m" style="top:608.10px;font-size:8.8px;line-height:8.8px;color:#8a8e97;left:702px;transform:translateX(-100%);">36</span>
<span id="t142" class="t m" style="top:621.54px;font-size:8.8px;line-height:8.8px;color:#8a8e97;left:702px;transform:translateX(-100%);">37</span>
<span id="t143" class="t m" style="top:621.54px;font-size:8.8px;line-height:8.8px;color:#eceef1;left:720px;">  <span style="color:#ab72ff">if</span> (INDICES_SUPPORT) pairs.<span style="color:#f0c518">hasIndices</span> = <span style="color:#ff8a52">'d'</span>;</span>
<span id="t144" class="t m" style="top:634.98px;font-size:8.8px;line-height:8.8px;color:#8a8e97;left:702px;transform:translateX(-100%);">38</span>
<span id="t145" class="t m" style="top:648.43px;font-size:8.8px;line-height:8.8px;color:#8a8e97;left:702px;transform:translateX(-100%);">39</span>
<span id="t146" class="t m" style="top:648.43px;font-size:8.8px;line-height:8.8px;color:#eceef1;left:720px;">  <span style="color:#ab72ff">for</span> (<span style="color:#ab72ff">var</span> <span style="color:#72a8fb">key</span> <span style="color:#ab72ff">in</span> pairs) addGetter(key, pairs[key]);</span>
<div style="left:1200px;top:131px;width:15px;height:528px;background:#2b2b2c;"></div>
<svg style="left:1202.5px;top:135px;" width="10" height="10" viewBox="0 0 10 10"><path d="M0.20000000000000018 7.16L9.8 7.16L5 2.36Z" fill="#a8a8a8"/></svg>
<svg style="left:1202.5px;top:644.5px;" width="10" height="10" viewBox="0 0 10 10"><path d="M0.20000000000000018 2.84L9.8 2.84L5 7.640000000000001Z" fill="#a8a8a8"/></svg>
<div style="left:1203.7px;top:148.6px;width:9px;height:224px;background:#9f9f9f;border-radius:4.5px"></div>
<div style="left:672px;top:659px;width:543px;height:15px;background:#2b2b2c;"></div>
<svg style="left:675.5px;top:661.5px;" width="10" height="10" viewBox="0 0 10 10"><path d="M7.07 0.40000000000000036L7.07 9.6L2.47 5Z" fill="#a8a8a8"/></svg>
<svg style="left:1187px;top:661.5px;" width="10" height="10" viewBox="0 0 10 10"><path d="M2.93 0.40000000000000036L2.93 9.6L7.529999999999999 5Z" fill="#a8a8a8"/></svg>
<div style="left:690px;top:662px;width:460px;height:9px;background:#9f9f9f;border-radius:4.5px"></div>
<div style="left:672px;top:674px;width:543px;height:1px;background:#56585d;"></div>
<span id="t147" class="t m" style="top:680.31px;font-size:11px;line-height:11px;color:#d5d6da;left:678px;transform-origin:0 50%;transform:scaleX(1.0225);">{}</span>
<span id="t148" class="t " style="top:680.21px;font-size:9.6px;line-height:9.6px;color:#dfe0e3;left:1016.5px;transform-origin:0 50%;transform:scaleX(0.9558);">(From </span>
<span id="t149" class="t " style="top:680.21px;font-size:9.6px;line-height:9.6px;color:#dfe0e3;left:1043.8px;transform-origin:0 50%;transform:scaleX(0.9792);text-decoration:underline;">polyfills-CC7pl93r.js</span>
<span id="t150" class="t " style="top:680.21px;font-size:9.6px;line-height:9.6px;color:#dfe0e3;left:1126.5px;">)</span>
<span id="t151" class="t " style="top:680.21px;font-size:9.6px;line-height:9.6px;color:#9fc4fb;left:1139px;transform-origin:0 50%;transform:scaleX(1.0122);">Coverage: n/a</span>
</section>
<section aria-label="Debugger sidebar">
<div style="left:1216px;top:131px;width:224px;height:564px;background:#24262b;"></div>
<div style="left:1216px;top:131px;width:224px;height:33.5px;background:#282b34;"></div>
<svg style="left:1221.7px;top:134.6px;" width="8" height="8" viewBox="0 0 8 8"><path d="M2.2399999999999998 0.7999999999999998L6.4 4L2.2399999999999998 7.2Z" fill="#c7c8cc"/></svg>
<span id="t152" class="t " style="top:133.91px;font-size:9.6px;line-height:9.6px;color:#e6e7ea;left:1233px;transform-origin:0 50%;transform:scaleX(0.9872);">Watch</span>
<svg style="left:1221.5px;top:152.8px;" width="8" height="8" viewBox="0 0 8 8"><path d="M0.7999999999999998 2.2399999999999998L7.2 2.2399999999999998L4 6.4Z" fill="#c7c8cc"/></svg>
<span id="t153" class="t " style="top:152.01px;font-size:9.6px;line-height:9.6px;color:#e6e7ea;left:1233px;transform-origin:0 50%;transform:scaleX(0.9808);">Breakpoints</span>
<div style="left:1216px;top:164px;width:224px;height:1px;background:#595b61;"></div>
<div style="left:1221px;top:170.3px;width:9px;height:9px;background:#38393e;border:1px solid #5d5f65;border-radius:2px"></div>
<span id="t154" class="t " style="top:170.10px;font-size:9.6px;line-height:9.6px;color:#e6e7ea;left:1235.5px;transform-origin:0 50%;transform:scaleX(0.9793);">Pause on uncaught exceptions</span>
<div style="left:1221px;top:185.2px;width:9px;height:9px;background:#38393e;border:1px solid #5d5f65;border-radius:2px"></div>
<span id="t155" class="t " style="top:185.01px;font-size:9.6px;line-height:9.6px;color:#e6e7ea;left:1235.5px;transform-origin:0 50%;transform:scaleX(0.9747);">Pause on caught exceptions</span>
<div style="left:1216px;top:199px;width:224px;height:16px;background:#282b34;"></div>
<svg style="left:1221.5px;top:204px;" width="8" height="8" viewBox="0 0 8 8"><path d="M0.7999999999999998 2.2399999999999998L7.2 2.2399999999999998L4 6.4Z" fill="#c7c8cc"/></svg>
<span id="t156" class="t " style="top:203.01px;font-size:9.6px;line-height:9.6px;color:#e6e7ea;left:1233px;transform-origin:0 50%;transform:scaleX(0.9447);">Scope</span>
<div style="left:1216px;top:215px;width:224px;height:1px;background:#595b61;"></div>
<span id="t157" class="t " style="top:223.01px;font-size:9.6px;line-height:9.6px;color:#a9abb1;font-style:italic;left:1328.3px;transform:translateX(-50%) scaleX(0.9577);">Not paused</span>
<div style="left:1216px;top:238px;width:224px;height:16.5px;background:#282b34;"></div>
<svg style="left:1221.5px;top:243px;" width="8" height="8" viewBox="0 0 8 8"><path d="M0.7999999999999998 2.2399999999999998L7.2 2.2399999999999998L4 6.4Z" fill="#c7c8cc"/></svg>
<span id="t158" class="t " style="top:242.01px;font-size:9.6px;line-height:9.6px;color:#e6e7ea;left:1233px;transform-origin:0 50%;transform:scaleX(0.9401);">Call Stack</span>
<div style="left:1216px;top:254.3px;width:224px;height:1px;background:#595b61;"></div>
<span id="t159" class="t " style="top:262.01px;font-size:9.6px;line-height:9.6px;color:#a9abb1;font-style:italic;left:1328.3px;transform:translateX(-50%) scaleX(0.9577);">Not paused</span>
<div style="left:1216px;top:277px;width:224px;height:87.7px;background:#282b34;"></div>
<svg style="left:1221.7px;top:282.1px;" width="8" height="8" viewBox="0 0 8 8"><path d="M2.2399999999999998 0.7999999999999998L6.4 4L2.2399999999999998 7.2Z" fill="#c7c8cc"/></svg>
<span id="t160" class="t " style="top:281.10px;font-size:9.6px;line-height:9.6px;color:#e6e7ea;left:1233px;transform-origin:0 50%;transform:scaleX(0.9839);">XHR/fetch Breakpoints</span>
<svg style="left:1221.7px;top:300.0px;" width="8" height="8" viewBox="0 0 8 8"><path d="M2.2399999999999998 0.7999999999999998L6.4 4L2.2399999999999998 7.2Z" fill="#c7c8cc"/></svg>
<span id="t161" class="t " style="top:299.01px;font-size:9.6px;line-height:9.6px;color:#e6e7ea;left:1233px;transform-origin:0 50%;transform:scaleX(0.9879);">DOM Breakpoints</span>
<svg style="left:1221.7px;top:317.1px;" width="8" height="8" viewBox="0 0 8 8"><path d="M2.2399999999999998 0.7999999999999998L6.4 4L2.2399999999999998 7.2Z" fill="#c7c8cc"/></svg>
<span id="t162" class="t " style="top:316.10px;font-size:9.6px;line-height:9.6px;color:#e6e7ea;left:1233px;transform-origin:0 50%;transform:scaleX(0.9664);">Global Listeners</span>
<svg style="left:1221.7px;top:335.1px;" width="8" height="8" viewBox="0 0 8 8"><path d="M2.2399999999999998 0.7999999999999998L6.4 4L2.2399999999999998 7.2Z" fill="#c7c8cc"/></svg>
<span id="t163" class="t " style="top:334.10px;font-size:9.6px;line-height:9.6px;color:#e6e7ea;left:1233px;transform-origin:0 50%;transform:scaleX(0.9697);">Event Listener Breakpoints</span>
<svg style="left:1221.7px;top:353.0px;" width="8" height="8" viewBox="0 0 8 8"><path d="M2.2399999999999998 0.7999999999999998L6.4 4L2.2399999999999998 7.2Z" fill="#c7c8cc"/></svg>
<span id="t164" class="t " style="top:352.01px;font-size:9.6px;line-height:9.6px;color:#e6e7ea;left:1233px;transform-origin:0 50%;transform:scaleX(0.9743);">CSP Violation Breakpoints</span>
</section>
<section aria-label="Console drawer">
<div style="left:378px;top:696px;width:1062px;height:21px;background:#3a3b3f;"></div>
<div style="left:378px;top:717px;width:1062px;height:1px;background:#5c5e63;"></div>
<div style="left:390.0px;top:701.9px;width:2.0px;height:2.0px;background:#c7c8cc;border-radius:1px"></div>
<div style="left:390.0px;top:705.5px;width:2.0px;height:2.0px;background:#c7c8cc;border-radius:1px"></div>
<div style="left:390.0px;top:709.1px;width:2.0px;height:2.0px;background:#c7c8cc;border-radius:1px"></div>
<span id="t165" class="t " style="top:702.71px;font-size:9.6px;line-height:9.6px;color:#7cacf8;left:408.5px;transform-origin:0 50%;transform:scaleX(0.9800);">Console</span>
<div style="left:400px;top:715px;width:52px;height:2px;background:#9fc4fb;"></div>
<span id="t166" class="t " style="top:702.71px;font-size:9.6px;line-height:9.6px;color:#dfe0e3;left:460px;transform-origin:0 50%;transform:scaleX(0.9639);">AI assistance</span>
<svg style="left:519.5px;top:703.6px;" width="8" height="8" viewBox="0 0 8 8"><path d="M2.6 0.6H5.4M3 0.6V2.9L0.9 6.4Q0.6 7.4 1.6 7.4H6.4Q7.4 7.4 7.1 6.4L5 2.9V0.6" stroke="#c7c8cc" stroke-width="0.9" fill="none"/></svg>
<svg style="left:1421px;top:700px;" width="12" height="12" viewBox="0 0 12 12"><path d="M2.6 2.6L9.4 9.4M9.4 2.6L2.6 9.4" stroke="#c7c8cc" stroke-width="1.2" fill="none"/></svg>
<div style="left:378px;top:718px;width:1062px;height:20px;background:#24262b;"></div>
<div style="left:378px;top:738px;width:1062px;height:1px;background:#4b4c51;"></div>
<svg style="left:384.5px;top:722.5px;" width="13" height="12" viewBox="0 0 13 12"><rect x="0.7" y="0.7" width="11.2" height="10.4" rx="1.4" stroke="#c7c8cc" stroke-width="1.2" fill="none"/><path d="M3.9 1V11" stroke="#c7c8cc" stroke-width="1.1"/><path d="M6.2 3.9V8L8.8 5.95Z" fill="#c7c8cc"/></svg>
<svg style="left:406.5px;top:722px;" width="13" height="13" viewBox="0 0 13 13"><circle cx="6.5" cy="6.4" r="5.4" stroke="#c7c8cc" stroke-width="1.1" fill="none"/><path d="M2.8 10.2L10.2 2.6" stroke="#c7c8cc" stroke-width="1.1"/></svg>
<div style="left:428px;top:722px;width:1px;height:13px;background:#55575c;"></div>
<span id="t167" class="t " style="top:723.51px;font-size:9.6px;line-height:9.6px;color:#dfe0e3;left:438px;transform-origin:0 50%;transform:scaleX(1.0117);">top</span>
<svg style="left:456.8px;top:727.2px;" width="6" height="5" viewBox="0 0 6 5"><path d="M0.2 0.3H5.4L2.8 4.5Z" fill="#dfe0e3"/></svg>
<div style="left:472px;top:722px;width:1px;height:13px;background:#55575c;"></div>
<svg style="left:480px;top:723px;" width="14" height="10" viewBox="0 0 14 10"><path d="M0.8 5Q7 -3.4 13.2 5Q7 13.4 0.8 5Z" stroke="#c7c8cc" stroke-width="1.0" fill="none"/><circle cx="7" cy="5" r="2" stroke="#c7c8cc" stroke-width="1.0" fill="none"/></svg>
<div style="left:501px;top:722px;width:1px;height:13px;background:#55575c;"></div>
<div style="left:508px;top:720px;width:767px;height:16.5px;background:#3a3b40;border-radius:8.3px"></div>
<svg style="left:516px;top:724.5px;" width="8" height="8" viewBox="0 0 8 8"><path d="M0.8 0.8H7.2L4.8 3.8V7.2H3.2V3.8Z" stroke="#c7c8cc" stroke-width="0.9" fill="none" stroke-linejoin="round"/></svg>
<span id="t168" class="t " style="top:723.51px;font-size:9.6px;line-height:9.6px;color:#c7c8cc;left:530.5px;transform-origin:0 50%;transform:scaleX(0.9612);">Filter</span>
<span id="t169" class="t " style="top:723.51px;font-size:9.6px;line-height:9.6px;color:#dfe0e3;left:1283.8px;transform-origin:0 50%;transform:scaleX(0.9810);">Default levels</span>
<svg style="left:1344.6px;top:727.2px;" width="6" height="5" viewBox="0 0 6 5"><path d="M0.2 0.3H5.4L2.8 4.5Z" fill="#dfe0e3"/></svg>
<div style="left:1360px;top:722px;width:1px;height:13px;background:#55575c;"></div>
<span id="t170" class="t " style="top:723.51px;font-size:9.6px;line-height:9.6px;color:#dfe0e3;left:1364.5px;transform-origin:0 50%;transform:scaleX(0.9491);">No Issues</span>
<div style="left:1411.5px;top:722px;width:1px;height:13px;background:#55575c;"></div>
<svg style="left:1418px;top:721.3px;" width="14" height="14" viewBox="0 0 14 14"><path d="M5.68 2.70L5.87 1.21L8.13 1.21L8.32 2.70L10.07 3.71L11.45 3.13L12.58 5.08L11.38 5.99L11.38 8.01L12.58 8.92L11.45 10.87L10.07 10.29L8.32 11.30L8.13 12.79L5.87 12.79L5.68 11.30L3.93 10.29L2.55 10.87L1.42 8.92L2.62 8.01L2.62 5.99L1.42 5.08L2.55 3.13L3.93 3.71Z" fill="none" stroke="#c7c8cc" stroke-width="1.05" stroke-linejoin="round"/><circle cx="7" cy="7" r="1.8" fill="#c7c8cc"/></svg>
<div style="left:378px;top:739px;width:1047px;height:159px;background:#24262b;"></div>
<svg style="left:390px;top:745.2px;" width="6" height="7" viewBox="0 0 6 7"><path d="M1 0.8L4.6 3.5L1 6.2" stroke="#b9bbc0" stroke-width="1.0" fill="none"/></svg>
<span id="t171" class="t m" style="top:746.31px;font-size:8.8px;line-height:8.8px;color:#cfd1d6;left:400.5px;">getIp(all)</span>
<div style="left:381px;top:758px;width:1041px;height:25px;background:#4e3334;border-radius:3px"></div>
<div style="left:388.3px;top:760.3px;width:8.4px;height:8.4px;background:#ee5a50;border-radius:5px"></div>
<svg style="left:386.5px;top:758.5px;" width="12" height="12" viewBox="0 0 12 12"><path d="M4.4 4.4L7.6 7.6M7.6 4.4L4.4 7.6" stroke="#4a1612" stroke-width="0.8" fill="none"/></svg>
<svg style="left:401.9px;top:760.8px;" width="8" height="8" viewBox="0 0 8 8"><path d="M2.2399999999999998 0.7999999999999998L6.4 4L2.2399999999999998 7.2Z" fill="#d5d7dc"/></svg>
<span id="t172" class="t m" style="top:762.10px;font-size:8.8px;line-height:8.8px;color:#fae6e3;left:411.3px;">Uncaught ReferenceError: getIp is not defined</span>
<span id="t173" class="t m" style="top:774.40px;font-size:8.8px;line-height:8.8px;color:#fae6e3;left:411.3px;">  at &lt;anonymous&gt;:1:1</span>
<span id="t174" class="t m" style="top:762.10px;font-size:8.8px;line-height:8.8px;color:#a8c7fa;left:1362px;text-decoration:underline;">VM421:1</span>
<svg style="left:390px;top:791.5px;" width="6" height="7" viewBox="0 0 6 7"><path d="M1 0.8L4.6 3.5L1 6.2" stroke="#b9bbc0" stroke-width="1.0" fill="none"/></svg>
<span id="t175" class="t m" style="top:792.10px;font-size:8.8px;line-height:8.8px;color:#cfd1d6;left:400.5px;">get password</span>
<div style="left:381px;top:804.3px;width:1041px;height:12.7px;background:#4e3334;border-radius:3px"></div>
<div style="left:388.3px;top:806.8px;width:8.4px;height:8.4px;background:#ee5a50;border-radius:5px"></div>
<svg style="left:386.5px;top:805px;" width="12" height="12" viewBox="0 0 12 12"><path d="M4.4 4.4L7.6 7.6M7.6 4.4L4.4 7.6" stroke="#4a1612" stroke-width="0.8" fill="none"/></svg>
<span id="t176" class="t m" style="top:807.71px;font-size:8.8px;line-height:8.8px;color:#fae6e3;left:400.5px;">Uncaught SyntaxError: Unexpected identifier 'password'</span>
<span id="t177" class="t m" style="top:807.71px;font-size:8.8px;line-height:8.8px;color:#a8c7fa;left:1362px;text-decoration:underline;">VM452:1</span>
<svg style="left:390px;top:825.2px;" width="6" height="7" viewBox="0 0 6 7"><path d="M1 0.8L4.6 3.5L1 6.2" stroke="#b9bbc0" stroke-width="1.0" fill="none"/></svg>
<span id="t178" class="t m" style="top:826.31px;font-size:8.8px;line-height:8.8px;color:#cfd1d6;left:400.5px;">SendPassword</span>
<div style="left:381px;top:838px;width:1041px;height:25px;background:#4e3334;border-radius:3px"></div>
<div style="left:388.3px;top:841.3px;width:8.4px;height:8.4px;background:#ee5a50;border-radius:5px"></div>
<svg style="left:386.5px;top:839.5px;" width="12" height="12" viewBox="0 0 12 12"><path d="M4.4 4.4L7.6 7.6M7.6 4.4L4.4 7.6" stroke="#4a1612" stroke-width="0.8" fill="none"/></svg>
<svg style="left:401.9px;top:841.9px;" width="8" height="8" viewBox="0 0 8 8"><path d="M2.2399999999999998 0.7999999999999998L6.4 4L2.2399999999999998 7.2Z" fill="#d5d7dc"/></svg>
<span id="t179" class="t m" style="top:843.31px;font-size:8.8px;line-height:8.8px;color:#fae6e3;left:411.3px;">Uncaught ReferenceError: SendPassword is not defined</span>
<span id="t180" class="t m" style="top:854.40px;font-size:8.8px;line-height:8.8px;color:#fae6e3;left:411.3px;">  at &lt;anonymous&gt;:1:1</span>
<span id="t181" class="t m" style="top:843.31px;font-size:8.8px;line-height:8.8px;color:#a8c7fa;left:1362px;text-decoration:underline;">VM479:1</span>
<svg style="left:386.5px;top:871.5px;" width="6" height="7" viewBox="0 0 6 7"><path d="M1 0.8L4.6 3.5L1 6.2" stroke="#5f93e8" stroke-width="1.0" fill="none"/></svg>
<div style="left:1425px;top:739px;width:15px;height:159px;background:#2b2b2c;"></div>
<svg style="left:1427.5px;top:742.5px;" width="10" height="10" viewBox="0 0 10 10"><path d="M0.20000000000000018 7.16L9.8 7.16L5 2.36Z" fill="#a8a8a8"/></svg>
<svg style="left:1427.5px;top:884px;" width="10" height="10" viewBox="0 0 10 10"><path d="M0.20000000000000018 2.84L9.8 2.84L5 7.640000000000001Z" fill="#a8a8a8"/></svg>
<div style="left:1428px;top:758.8px;width:9px;height:121.2px;background:#9f9f9f;border-radius:4.5px"></div>
</section>
<section aria-label="Pane dividers">
<div style="left:671px;top:131px;width:1px;height:564px;background:#5c5e63;"></div>
<div style="left:1215px;top:131px;width:1.2px;height:564px;background:#5c5e63;"></div>
<div style="left:0px;top:897.8px;width:1440px;height:2.2px;background:#202020;"></div>
<div style="left:345px;top:897.8px;width:48px;height:2.2px;background:#5e5e5e;"></div>
<div style="left:1435px;top:896.5px;width:1px;height:3.5px;background:#9a9a9a;"></div>
</section>
</body></html>
